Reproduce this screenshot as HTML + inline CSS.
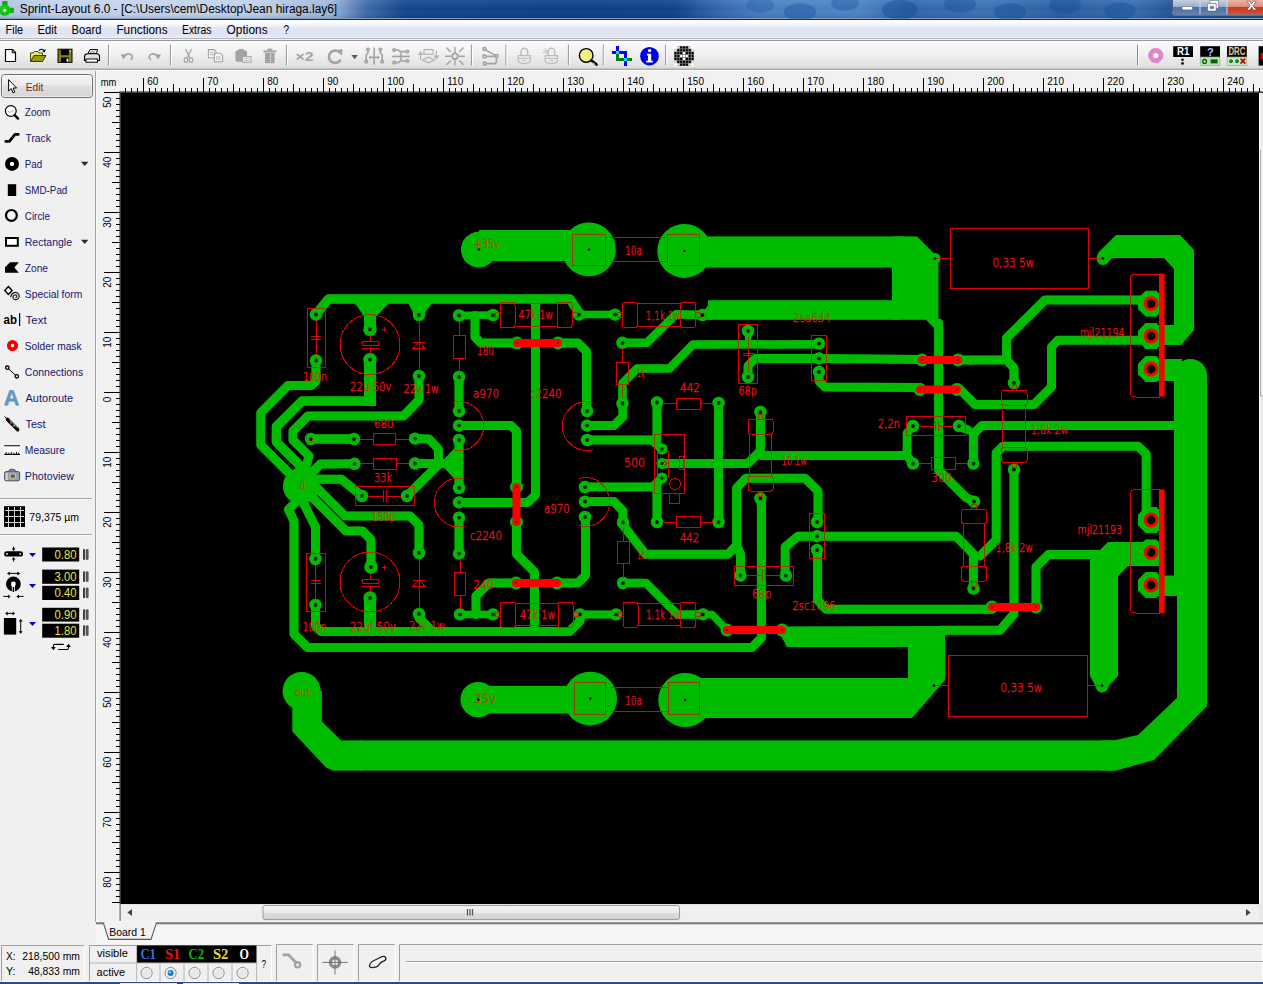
<!DOCTYPE html>
<html><head><meta charset="utf-8"><title>Sprint-Layout 6.0</title>
<style>

html,body{margin:0;padding:0}
body{width:1263px;height:984px;overflow:hidden;background:#f0f0f0;position:relative;font-family:"Liberation Sans",sans-serif;font-size:11px;color:#000}
svg{font-family:"Liberation Sans",sans-serif}

</style></head>
<body>

<svg id="main" width="1263" height="984" viewBox="0 0 1263 984" style="position:absolute;left:0;top:0">
<defs>
<linearGradient id="gTitle" x1="0" x2="1263" y1="0" y2="0" gradientUnits="userSpaceOnUse">
<stop offset="0" stop-color="#aec4e2"/><stop offset="0.05" stop-color="#c4d4ec"/><stop offset="0.2" stop-color="#bfd0ea"/>
<stop offset="0.262" stop-color="#9db6da"/><stop offset="0.29" stop-color="#3e6aa8"/><stop offset="0.32" stop-color="#12458c"/>
<stop offset="0.45" stop-color="#0c3d86"/><stop offset="0.535" stop-color="#0f418a"/><stop offset="0.56" stop-color="#2a5ea6"/><stop offset="0.60" stop-color="#477dc0"/>
<stop offset="0.68" stop-color="#4c83c6"/><stop offset="0.72" stop-color="#2f66ac"/><stop offset="0.78" stop-color="#3a70b4"/><stop offset="0.84" stop-color="#2a5fa4"/><stop offset="0.90" stop-color="#356aae"/><stop offset="0.93" stop-color="#1f5298"/><stop offset="1" stop-color="#1a4a8e"/>
</linearGradient>
<linearGradient id="gTitleV" x1="0" x2="0" y1="0" y2="1">
<stop offset="0" stop-color="#fff" stop-opacity="0.10"/><stop offset="0.5" stop-color="#fff" stop-opacity="0"/><stop offset="1" stop-color="#000" stop-opacity="0.10"/>
</linearGradient>
<linearGradient id="gMenu" x1="0" x2="0" y1="0" y2="1">
<stop offset="0" stop-color="#ffffff"/><stop offset="0.3" stop-color="#f3f5fb"/><stop offset="0.45" stop-color="#e1e5f3"/><stop offset="0.8" stop-color="#dfe3f2"/><stop offset="1" stop-color="#eceff8"/>
</linearGradient>
<linearGradient id="gTool" x1="0" x2="0" y1="0" y2="1">
<stop offset="0" stop-color="#fcfcfc"/><stop offset="0.5" stop-color="#efefef"/><stop offset="1" stop-color="#dedede"/>
</linearGradient>
<linearGradient id="gBtn" x1="0" x2="0" y1="0" y2="1">
<stop offset="0" stop-color="#f4f4f4"/><stop offset="0.45" stop-color="#ebebeb"/><stop offset="0.5" stop-color="#dfdfdf"/><stop offset="1" stop-color="#d6d6d6"/>
</linearGradient>
<linearGradient id="gWB" x1="0" x2="0" y1="0" y2="1">
<stop offset="0" stop-color="#c4d0e2"/><stop offset="0.45" stop-color="#9db0cc"/><stop offset="0.5" stop-color="#4f70a4"/><stop offset="1" stop-color="#5f82b6"/>
</linearGradient>
<linearGradient id="gWC" x1="0" x2="0" y1="0" y2="1">
<stop offset="0" stop-color="#ebb4a8"/><stop offset="0.45" stop-color="#de8c7c"/><stop offset="0.5" stop-color="#c8391f"/><stop offset="1" stop-color="#d8502c"/>
</linearGradient>
<linearGradient id="gThumb" x1="0" x2="0" y1="0" y2="1">
<stop offset="0" stop-color="#f6f6f6"/><stop offset="0.5" stop-color="#e9e9e9"/><stop offset="0.5" stop-color="#dcdcdc"/><stop offset="1" stop-color="#d2d2d2"/>
</linearGradient>
<linearGradient id="gScr" x1="0" x2="1" y1="0" y2="0">
<stop offset="0" stop-color="#101010"/><stop offset="0.5" stop-color="#6a6a6a"/><stop offset="1" stop-color="#101010"/>
</linearGradient>
</defs>
<rect x="0" y="0" width="1263" height="984" fill="#f0f0f0"/>
<rect x="0" y="0" width="1263" height="18" fill="url(#gTitle)"/>
<rect x="0" y="0" width="1263" height="18" fill="url(#gTitleV)"/>
<rect x="0" y="18" width="1263" height="1" fill="#7f9ccb"/>
<rect x="0" y="19" width="1263" height="1" fill="#1c2b55"/>
<ellipse cx="800" cy="12" rx="16" ry="8.8" fill="#14478e" opacity="0.35"/>
<ellipse cx="845" cy="3" rx="14" ry="7.7" fill="#14478e" opacity="0.3"/>
<ellipse cx="900" cy="10" rx="18" ry="9.9" fill="#14478e" opacity="0.4"/>
<ellipse cx="960" cy="4" rx="16" ry="8.8" fill="#14478e" opacity="0.35"/>
<ellipse cx="1010" cy="12" rx="16" ry="8.8" fill="#14478e" opacity="0.35"/>
<ellipse cx="1065" cy="5" rx="16" ry="8.8" fill="#14478e" opacity="0.35"/>
<ellipse cx="1120" cy="11" rx="16" ry="8.8" fill="#14478e" opacity="0.35"/>
<ellipse cx="760" cy="5" rx="14" ry="7.7" fill="#14478e" opacity="0.25"/>
<rect x="0" y="18" width="1263" height="2" fill="none"/>
<g><rect x="2.2" y="1" width="5.4" height="6" rx="1" fill="#0fae0f"/><rect x="6" y="7.8" width="8" height="5.2" rx="1" fill="#0fae0f"/><circle cx="4.8" cy="10.2" r="5.6" fill="#12c012"/><circle cx="4.2" cy="9.6" r="3.4" fill="#1ed41e" opacity="0.7"/><circle cx="4.8" cy="10.2" r="1.5" fill="#e8ffe8"/></g>
<text x="19.7" y="12.8" font-size="12" fill="#000" textLength="317.5" lengthAdjust="spacingAndGlyphs">Sprint-Layout 6.0 - [C:\Users\cem\Desktop\Jean hiraga.lay6]</text>
<path d="M1172,0 L1172,11 Q1172,15.5 1176.5,15.5 L1263,15.5 L1263,0 Z" fill="#dfe8f4" opacity="0.9"/>
<path d="M1173,0 L1173,10.5 Q1173,14.5 1177,14.5 L1199.5,14.5 L1199.5,0 Z" fill="url(#gWB)"/>
<rect x="1200.5" y="0" width="26" height="14.5" fill="url(#gWB)"/>
<rect x="1227.5" y="0" width="35.5" height="14.5" fill="url(#gWC)"/>
<path d="M1172.5,0 L1172.5,11 Q1172.5,15 1176.5,15 L1263,15" fill="none" stroke="#2a3f66" stroke-width="0.8"/>
<rect x="1182" y="6.5" width="10.5" height="3.4" fill="#fff" stroke="#44546c" stroke-width="0.5"/>
<path d="M1210,0.5 h8.5 v8 h-2.5 v-5.2 h-6 Z" fill="#fff" stroke="#44546c" stroke-width="0.5"/><path d="M1207.6,3.6 h8.5 v7.4 h-8.5 Z M1210.2,6.2 v2.4 h3.3 v-2.4 Z" fill="#fff" fill-rule="evenodd" stroke="#44546c" stroke-width="0.5"/>
<path d="M1247,1.2 L1249.8,1.2 L1251.6,4 L1253.4,1.2 L1256.2,1.2 L1253,5.6 L1256.4,10 L1253.4,10 L1251.6,7.2 L1249.8,10 L1246.8,10 L1250.2,5.6 Z" fill="#fff" stroke="#5a2a20" stroke-width="0.5"/>
<rect x="0" y="20" width="1263" height="18" fill="url(#gMenu)"/>
<rect x="0" y="38" width="1263" height="1" fill="#b4b6be"/><rect x="0" y="39" width="1263" height="1" fill="#f4f4f6"/><rect x="0" y="40" width="1263" height="1" fill="#989898"/>
<text x="5.6" y="33.8" font-size="12" fill="#000" textLength="17.6" lengthAdjust="spacingAndGlyphs">File</text>
<text x="37.6" y="33.8" font-size="12" fill="#000" textLength="19.4" lengthAdjust="spacingAndGlyphs">Edit</text>
<text x="71.6" y="33.8" font-size="12" fill="#000" textLength="29.8" lengthAdjust="spacingAndGlyphs">Board</text>
<text x="116.4" y="33.8" font-size="12" fill="#000" textLength="51.2" lengthAdjust="spacingAndGlyphs">Functions</text>
<text x="182" y="33.8" font-size="12" fill="#000" textLength="29.4" lengthAdjust="spacingAndGlyphs">Extras</text>
<text x="226.6" y="33.8" font-size="12" fill="#000" textLength="41" lengthAdjust="spacingAndGlyphs">Options</text>
<text x="283.4" y="33.8" font-size="12" fill="#000" textLength="5.6" lengthAdjust="spacingAndGlyphs">?</text>
<rect x="0" y="41" width="1263" height="27" fill="url(#gTool)"/>
<rect x="0" y="68" width="1263" height="1" fill="#c2c2c2"/><rect x="0" y="69" width="1263" height="1" fill="#adadad"/>
<rect x="0" y="70" width="95" height="874" fill="#f0f0f0"/>
<rect x="95" y="71" width="1" height="851" fill="#a2a2a2"/><rect x="96" y="71" width="1" height="851" fill="#fbfbfb"/>
<path d="M5.5,49.5 L12.5,49.5 L15.5,52.5 L15.5,61.5 L5.5,61.5 Z" fill="#fff" stroke="#000" stroke-width="1.2"/><path d="M12.2,49.5 L12.2,52.8 L15.5,52.8" fill="none" stroke="#000" stroke-width="1"/>
<path d="M30.5,61.5 L30.5,53 L33,53 L34.5,51.5 L38,51.5 L39,53 L42.5,53 L42.5,55.5" fill="#e8e870" stroke="#4a4a00" stroke-width="1"/><path d="M30.5,61.5 L34,55.5 L46,55.5 L42.5,61.5 Z" fill="#9a9a10" stroke="#3a3a00" stroke-width="1"/><path d="M39,50.5 Q42,47.8 44.3,50.8" fill="none" stroke="#000" stroke-width="1.1"/><path d="M45.8,49 L44.8,52.6 L42,51.2 Z" fill="#000"/>
<rect x="58" y="49.2" width="14" height="13.2" fill="#84840c" stroke="#000" stroke-width="1"/><rect x="60.8" y="49.6" width="8" height="5.6" fill="#000"/><rect x="61" y="57.4" width="8" height="5" fill="#000"/><rect x="66.6" y="58.6" width="1.8" height="3.2" fill="#fff"/><rect x="69.6" y="50.2" width="1.4" height="1.4" fill="#d8d8a0"/>
<path d="M88,53.5 L90,49.5 L97.5,49.5 L96.5,53.5 Z" fill="#fff" stroke="#000" stroke-width="1"/><path d="M84.5,57 Q84.5,54 87.5,53.8 L97,53.8 Q99.5,54 99.5,56.5 L99.5,60.5 L84.5,60.5 Z" fill="#e4e4e4" stroke="#000" stroke-width="1.1"/><rect x="86" y="59" width="11.5" height="3.2" fill="#fff" stroke="#000" stroke-width="1"/><rect x="90.5" y="57" width="3.4" height="1.4" fill="#d8d820"/><path d="M90.2,51 h5.4 M89.6,52.3 h5.4" stroke="#666" stroke-width="0.6"/>
<rect x="108.1" y="44.5" width="1" height="21" fill="#8c8c8c"/><rect x="109.1" y="44.5" width="1" height="21" fill="#ffffff"/>
<path d="M124,57 Q127,52.4 131,54.6 Q134,57 130.6,60" fill="none" stroke="#a3a3a3" stroke-width="1.5"/><path d="M120.6,54.4 L126.4,54.2 L123.4,59.4 Z" fill="#a3a3a3"/>
<path d="M157.6,57 Q154.6,52.4 150.6,54.6 Q147.6,57 151,60" fill="none" stroke="#a3a3a3" stroke-width="1.5"/><path d="M161,54.4 L155.2,54.2 L158.2,59.4 Z" fill="#a3a3a3"/>
<rect x="169.9" y="44.5" width="1" height="21" fill="#8c8c8c"/><rect x="170.9" y="44.5" width="1" height="21" fill="#ffffff"/>
<path d="M185.6,49 L189.6,57.6 M191.4,49 L187.4,57.6" stroke="#a3a3a3" stroke-width="1.2" fill="none"/><ellipse cx="186" cy="60" rx="1.8" ry="2.4" fill="none" stroke="#a3a3a3" stroke-width="1.1"/><ellipse cx="191" cy="60" rx="1.8" ry="2.4" fill="none" stroke="#a3a3a3" stroke-width="1.1"/>
<path d="M208.4,49.6 h5.6 l2,2 v6.2 h-7.6 Z" fill="#f6f6f6" stroke="#a3a3a3" stroke-width="1.1"/><path d="M214.4,53.2 h5.8 l2.4,2.4 v6.2 h-8.2 Z" fill="#f6f6f6" stroke="#a3a3a3" stroke-width="1.1"/><path d="M210,52.6 h3.6 M210,54.6 h3.6 M216,57 h4.8 M216,59 h4.8" stroke="#a3a3a3" stroke-width="0.8"/>
<rect x="235.4" y="50.6" width="11.6" height="11.2" rx="1.6" fill="#a3a3a3"/><rect x="238.4" y="49" width="5.6" height="2.6" rx="0.8" fill="#a3a3a3"/><rect x="242.6" y="56.6" width="8.4" height="5.6" fill="#f6f6f6" stroke="#a3a3a3" stroke-width="1"/><path d="M244,58.6 h5.4 M244,60.4 h5.4" stroke="#a3a3a3" stroke-width="0.7"/>
<rect x="265" y="52.8" width="9.6" height="10.4" fill="#a3a3a3"/><rect x="263.4" y="50.4" width="12.8" height="2" fill="#a3a3a3"/><rect x="267.4" y="48.6" width="4.8" height="2" fill="#a3a3a3"/><path d="M270.6,54 v8" stroke="#fff" stroke-width="0.9" stroke-dasharray="1.4 1"/>
<rect x="285.9" y="44.5" width="1" height="21" fill="#8c8c8c"/><rect x="286.9" y="44.5" width="1" height="21" fill="#ffffff"/>
<text x="295.6" y="61.4" font-size="12.5" font-weight="bold" fill="#a3a3a3" textLength="18" lengthAdjust="spacingAndGlyphs">×2</text>
<path d="M340.6,59.6 A6.2,6.2 0 1 1 339.8,52.6" fill="none" stroke="#a3a3a3" stroke-width="2.6"/><path d="M336,50 L342.6,49 L342,55.8 Z" fill="#a3a3a3"/>
<path d="M351.4,55 L357.8,55 L354.6,59.2 Z" fill="#5a5a5a"/>
<g fill="none" stroke="#a3a3a3" stroke-width="1.6"><path d="M374.2,47.6 v17"/><path d="M368,50.6 v2.4 l-1.8,2 v5.4"/><path d="M380.4,50.6 v2.4 l1.8,2 v5.4"/><path d="M369.4,57.4 h9.8"/><circle cx="368" cy="49.6" r="1.3"/><circle cx="366.2" cy="61.6" r="1.3"/><circle cx="380.4" cy="49.6" r="1.3"/><circle cx="382.2" cy="61.6" r="1.3"/></g><path d="M368.6,57.4 l2.4,-1.8 v3.6 Z M379.8,57.4 l-2.4,-1.8 v3.6 Z" fill="#a3a3a3"/>
<g fill="none" stroke="#a3a3a3" stroke-width="1.6"><path d="M392,56.4 h18"/><path d="M395.4,50 h3 l1.8,1.6 h6"/><path d="M395.4,62.6 h3 l1.8,-1.6 h6"/><path d="M401,52.4 v8"/><circle cx="394.2" cy="50" r="1.3"/><circle cx="407.4" cy="51.6" r="1.3"/><circle cx="394.2" cy="62.6" r="1.3"/><circle cx="407.4" cy="61" r="1.3"/></g>
<g fill="none" stroke="#b4b4b4" stroke-width="1.2"><rect x="424" y="49.6" width="9" height="4.6"/><path d="M420.6,53.4 v6.6 M420.6,52 l-1.8,2.4 h3.6 Z"/><path d="M436.4,50.4 v6.6 M436.4,58.6 l-1.8,-2.4 h3.6 Z"/><path d="M422.6,60 l6,-2.8 l6,2.8 l-6,2.8 Z"/></g>
<g fill="none" stroke="#a3a3a3" stroke-width="1.4"><path d="M455,47 v6 M455,59.4 v6 M445,56.2 h6.6 M458.4,56.2 h6.6"/><path d="M446.4,47.6 l4.4,4.4 M463.6,47.6 l-4.4,4.4 M446.4,64.8 l4.4,-4.4 M463.6,64.8 l-4.4,-4.4"/><circle cx="455" cy="56.2" r="2.8" stroke-width="1.8"/></g>
<rect x="470.9" y="44.5" width="1" height="21" fill="#8c8c8c"/><rect x="471.9" y="44.5" width="1" height="21" fill="#ffffff"/>
<g fill="none" stroke="#a3a3a3" stroke-width="1.6"><path d="M485,49.6 L496,55.6 M485,56.4 h9.6 M496.4,57.4 v5.4 M486.4,63.6 h10"/><circle cx="484.4" cy="49" r="1.5"/><circle cx="484.4" cy="56.4" r="1.5"/><circle cx="484.8" cy="63.6" r="1.5"/><circle cx="496.6" cy="56" r="1.5"/></g>
<rect x="505.5" y="44.5" width="1" height="21" fill="#8c8c8c"/><rect x="506.5" y="44.5" width="1" height="21" fill="#ffffff"/>
<g fill="none" stroke="#bcbcbc"><path d="M521.1,55 v-3 a3,3.4 0 0 1 6.6,0 v3" stroke-width="1.5"/><path d="M518.1,55.6 h12.4 v4 q0,4 -6.2,4 q-6.2,0 -6.2,-4 Z" stroke-width="1.2" fill="#ececec"/><path d="M518.1,58.4 h12.4 M522.1,60.8 h4.4" stroke-width="1"/></g>
<g fill="none" stroke="#bcbcbc"><path d="M548.1,55 v-3 a3,3.4 0 0 1 6.6,0 v3" stroke-width="1.5"/><path d="M545.1,55.6 h12.4 v4 q0,4 -6.2,4 q-6.2,0 -6.2,-4 Z" stroke-width="1.2" fill="#ececec"/><path d="M545.1,58.4 h12.4 M549.1,60.8 h4.4" stroke-width="1"/></g>
<path d="M543.6,49.6 l3.6,3 M545.6,48.4 l1.4,3.6 M542.6,52.4 l4,0.6" stroke="#bcbcbc" stroke-width="0.9"/>
<rect x="567.9" y="44.5" width="1" height="21" fill="#8c8c8c"/><rect x="568.9" y="44.5" width="1" height="21" fill="#ffffff"/>
<circle cx="586.2" cy="55.4" r="6.8" fill="#f2f28a" stroke="#000" stroke-width="1.4"/><path d="M591.4,60.4 L596.6,64.6" stroke="#000" stroke-width="2.6" stroke-linecap="round"/><path d="M592.6,62.4 L595,64.2" stroke="#fff" stroke-width="0.7"/>
<rect x="602.8" y="44.5" width="1" height="21" fill="#8c8c8c"/><rect x="603.8" y="44.5" width="1" height="21" fill="#ffffff"/>
<g shape-rendering="crispEdges"><rect x="612" y="51" width="9" height="3" fill="#0000ff"/><rect x="616" y="46" width="3" height="5" fill="#0000ff"/><rect x="616" y="54" width="3" height="7" fill="#008000"/><rect x="619" y="58" width="13" height="3" fill="#008000"/><rect x="624" y="51" width="3" height="7" fill="#0000ff"/><rect x="624" y="61" width="3" height="5" fill="#0000ff"/><rect x="616" y="51" width="3" height="3" fill="#00e0ff"/><rect x="624" y="58" width="3" height="3" fill="#00e0ff"/><rect x="619" y="51" width="5" height="3" fill="#0000ff"/></g>
<circle cx="649.5" cy="56.2" r="9.3" fill="#0000e6"/><circle cx="649.6" cy="50.6" r="1.7" fill="#fff"/><path d="M647,53.8 h4.2 v7 h1.6 v1.6 h-6.6 v-1.6 h1.8 v-5.4 h-1 Z" fill="#fff"/>
<rect x="665.2" y="44.5" width="1" height="21" fill="#8c8c8c"/><rect x="666.2" y="44.5" width="1" height="21" fill="#ffffff"/>
<g><rect x="674" y="46" width="20" height="20" fill="#878787"/><rect x="674.4" y="46.4" width="2.1" height="2.1" fill="#fff"/><rect x="677.26" y="46.4" width="2.1" height="2.1" fill="#fff"/><rect x="680.12" y="46.4" width="2.1" height="2.1" fill="#000"/><rect x="682.98" y="46.4" width="2.1" height="2.1" fill="#000"/><rect x="685.84" y="46.4" width="2.1" height="2.1" fill="#000"/><rect x="688.7" y="46.4" width="2.1" height="2.1" fill="#fff"/><rect x="691.56" y="46.4" width="2.1" height="2.1" fill="#fff"/><rect x="674.4" y="49.26" width="2.1" height="2.1" fill="#fff"/><rect x="677.26" y="49.26" width="2.1" height="2.1" fill="#000"/><rect x="680.12" y="49.26" width="2.1" height="2.1" fill="#000"/><rect x="682.98" y="49.26" width="2.1" height="2.1" fill="#000"/><rect x="685.84" y="49.26" width="2.1" height="2.1" fill="#000"/><rect x="688.7" y="49.26" width="2.1" height="2.1" fill="#000"/><rect x="691.56" y="49.26" width="2.1" height="2.1" fill="#fff"/><rect x="674.4" y="52.12" width="2.1" height="2.1" fill="#000"/><rect x="677.26" y="52.12" width="2.1" height="2.1" fill="#000"/><rect x="680.12" y="52.12" width="2.1" height="2.1" fill="#000"/><rect x="682.98" y="52.12" width="2.1" height="2.1" fill="#fff"/><rect x="685.84" y="52.12" width="2.1" height="2.1" fill="#000"/><rect x="688.7" y="52.12" width="2.1" height="2.1" fill="#000"/><rect x="691.56" y="52.12" width="2.1" height="2.1" fill="#000"/><rect x="674.4" y="54.98" width="2.1" height="2.1" fill="#000"/><rect x="677.26" y="54.98" width="2.1" height="2.1" fill="#000"/><rect x="680.12" y="54.98" width="2.1" height="2.1" fill="#fff"/><rect x="682.98" y="54.98" width="2.1" height="2.1" fill="#fff"/><rect x="685.84" y="54.98" width="2.1" height="2.1" fill="#fff"/><rect x="688.7" y="54.98" width="2.1" height="2.1" fill="#000"/><rect x="691.56" y="54.98" width="2.1" height="2.1" fill="#000"/><rect x="674.4" y="57.84" width="2.1" height="2.1" fill="#000"/><rect x="677.26" y="57.84" width="2.1" height="2.1" fill="#000"/><rect x="680.12" y="57.84" width="2.1" height="2.1" fill="#000"/><rect x="682.98" y="57.84" width="2.1" height="2.1" fill="#fff"/><rect x="685.84" y="57.84" width="2.1" height="2.1" fill="#000"/><rect x="688.7" y="57.84" width="2.1" height="2.1" fill="#000"/><rect x="691.56" y="57.84" width="2.1" height="2.1" fill="#000"/><rect x="674.4" y="60.7" width="2.1" height="2.1" fill="#fff"/><rect x="677.26" y="60.7" width="2.1" height="2.1" fill="#000"/><rect x="680.12" y="60.7" width="2.1" height="2.1" fill="#000"/><rect x="682.98" y="60.7" width="2.1" height="2.1" fill="#000"/><rect x="685.84" y="60.7" width="2.1" height="2.1" fill="#000"/><rect x="688.7" y="60.7" width="2.1" height="2.1" fill="#000"/><rect x="691.56" y="60.7" width="2.1" height="2.1" fill="#fff"/><rect x="674.4" y="63.56" width="2.1" height="2.1" fill="#fff"/><rect x="677.26" y="63.56" width="2.1" height="2.1" fill="#fff"/><rect x="680.12" y="63.56" width="2.1" height="2.1" fill="#000"/><rect x="682.98" y="63.56" width="2.1" height="2.1" fill="#000"/><rect x="685.84" y="63.56" width="2.1" height="2.1" fill="#000"/><rect x="688.7" y="63.56" width="2.1" height="2.1" fill="#fff"/><rect x="691.56" y="63.56" width="2.1" height="2.1" fill="#fff"/><rect x="674" y="46" width="2.9" height="2.9" fill="#fff"/><rect x="691.1" y="46" width="2.9" height="2.9" fill="#fff"/><rect x="674" y="63.1" width="2.9" height="2.9" fill="#fff"/><rect x="691.1" y="63.1" width="2.9" height="2.9" fill="#fff"/></g>
<rect x="1137" y="44.5" width="1" height="21" fill="#8c8c8c"/><rect x="1138" y="44.5" width="1" height="21" fill="#ffffff"/>
<circle cx="1155.7" cy="55.5" r="5.1" fill="#fff" stroke="#e184cb" stroke-width="5"/>
<rect x="1173.2" y="46.2" width="19.8" height="10.8" fill="#000"/><text x="1177" y="55.4" font-size="10.5" font-weight="bold" fill="#fff" textLength="12.4" lengthAdjust="spacingAndGlyphs">R1</text><circle cx="1182.5" cy="59.8" r="1.3" fill="#000"/><circle cx="1182.5" cy="63.4" r="1.3" fill="#000"/>
<rect x="1200.2" y="46.2" width="19.8" height="10.8" fill="#000"/><text x="1207" y="55.6" font-size="11" font-weight="bold" fill="#a8cfff">?</text><rect x="1200.2" y="57" width="19.8" height="8.6" fill="#b9dfb9" stroke="#8aa88a" stroke-width="0.6"/><circle cx="1204.6" cy="61.4" r="1.9" fill="none" stroke="#006400" stroke-width="1.3"/><rect x="1210.6" y="59.4" width="7" height="4" fill="#006400"/>
<rect x="1227" y="46.2" width="19.8" height="10.8" fill="#000"/><text x="1228.4" y="55.4" font-size="10" font-weight="bold" fill="#eccb94" textLength="17" lengthAdjust="spacingAndGlyphs">DRC</text><rect x="1227" y="57" width="19.8" height="8.6" fill="#c6e6c6" stroke="#8aa88a" stroke-width="0.6"/><circle cx="1231" cy="61.2" r="1.5" fill="#00c000" stroke="#004000" stroke-width="0.7"/><circle cx="1237" cy="61.2" r="1.5" fill="#00c000" stroke="#004000" stroke-width="0.7"/><path d="M1240.6,58.6 l4.6,5 M1245.2,58.6 l-4.6,5" stroke="#c00000" stroke-width="1.6"/>
<rect x="1258.6" y="46.2" width="4.4" height="19.4" fill="#000"/><rect x="1260.6" y="53" width="2.4" height="6" fill="#e00000"/>
<rect x="1.5" y="74.5" width="91" height="23" rx="3.2" fill="url(#gBtn)" stroke="#6f6f6f" stroke-width="1"/><rect x="2.5" y="75.5" width="89" height="21" rx="2.4" fill="none" stroke="#fafafa" stroke-width="0.8" opacity="0.8"/>
<path d="M8.6,79.6 L8.6,91 L11.2,88.6 L13,92.8 L14.8,92 L13,88 L16.6,88 Z" fill="#fff" stroke="#000" stroke-width="1"/>
<text x="25.7" y="90.7" font-size="11" fill="#8c1c1c" textLength="17.7" lengthAdjust="spacingAndGlyphs">Edit</text>
<text x="24.8" y="115.6" font-size="11" fill="#15156e" textLength="25.5" lengthAdjust="spacingAndGlyphs">Zoom</text>
<text x="25.5" y="141.6" font-size="11" fill="#15156e" textLength="25.3" lengthAdjust="spacingAndGlyphs">Track</text>
<text x="24.8" y="167.6" font-size="11" fill="#15156e" textLength="17.4" lengthAdjust="spacingAndGlyphs">Pad</text>
<text x="24.8" y="193.6" font-size="11" fill="#15156e" textLength="42.5" lengthAdjust="spacingAndGlyphs">SMD-Pad</text>
<text x="24.8" y="219.6" font-size="11" fill="#15156e" textLength="25.2" lengthAdjust="spacingAndGlyphs">Circle</text>
<text x="24.8" y="245.6" font-size="11" fill="#15156e" textLength="47.2" lengthAdjust="spacingAndGlyphs">Rectangle</text>
<text x="24.8" y="271.6" font-size="11" fill="#15156e" textLength="23.2" lengthAdjust="spacingAndGlyphs">Zone</text>
<text x="24.8" y="297.6" font-size="11" fill="#15156e" textLength="57.5" lengthAdjust="spacingAndGlyphs">Special form</text>
<text x="25.5" y="323.6" font-size="11" fill="#15156e" textLength="21.2" lengthAdjust="spacingAndGlyphs">Text</text>
<text x="24.8" y="349.6" font-size="11" fill="#15156e" textLength="56.8" lengthAdjust="spacingAndGlyphs">Solder mask</text>
<text x="24.8" y="375.6" font-size="11" fill="#15156e" textLength="58.4" lengthAdjust="spacingAndGlyphs">Connections</text>
<text x="25.5" y="401.6" font-size="11" fill="#15156e" textLength="47.7" lengthAdjust="spacingAndGlyphs">Autoroute</text>
<text x="25.5" y="427.6" font-size="11" fill="#15156e" textLength="20.1" lengthAdjust="spacingAndGlyphs">Test</text>
<text x="24.8" y="453.6" font-size="11" fill="#15156e" textLength="40.2" lengthAdjust="spacingAndGlyphs">Measure</text>
<text x="24.8" y="479.6" font-size="11" fill="#15156e" textLength="49.2" lengthAdjust="spacingAndGlyphs">Photoview</text>
<circle cx="10.8" cy="111" r="5.4" fill="#fff" stroke="#000" stroke-width="1.2"/><path d="M7.6,111 q1.6,2 3.2,1 q1.4,-0.8 3,-1.4" fill="none" stroke="#888" stroke-width="0.7"/><path d="M14.6,115.2 L18,118.6" stroke="#000" stroke-width="2.4" stroke-linecap="round"/>
<path d="M5.8,141.4 L9.4,141.4 L15,134.4 L18.2,134.4" fill="none" stroke="#000" stroke-width="2.8" stroke-linecap="round" stroke-linejoin="round"/>
<circle cx="12" cy="163.9" r="4.6" fill="#fff" stroke="#000" stroke-width="4.8"/>
<path d="M81,161.8 L88.4,161.8 L84.7,166 Z" fill="#2c2c2c"/>
<rect x="7.8" y="184.2" width="8.4" height="11.8" fill="#000"/>
<circle cx="11.4" cy="215.4" r="5.4" fill="#f4f4f4" stroke="#000" stroke-width="2.2"/>
<rect x="6" y="238" width="11.8" height="7.8" fill="#fff" stroke="#000" stroke-width="2"/>
<path d="M81,239.8 L88.4,239.8 L84.7,244 Z" fill="#2c2c2c"/>
<path d="M5,272.8 L5,267.2 L10,262.2 L18.8,262.2 L14.4,267.6 L18.8,272.8 Z" fill="#000"/>
<path d="M8.4,286.6 L12,290.6 L8.4,294.4 L4.8,290.6 Z" fill="#fff" stroke="#000" stroke-width="1.5"/><path d="M15.4,297.6 q1.8,-0.2 1.4,-1.8 q-0.6,-1.4 -2.4,-0.8 q-2,1 -1.2,3.2 q1.2,2.2 4,1.2 q2.8,-1.6 1.8,-4.6 q-1.4,-3 -5,-2.2 q-3,1 -3.2,4.6" fill="none" stroke="#222" stroke-width="1.2"/>
<text x="3.6" y="324" font-size="13" font-weight="bold" fill="#000" textLength="13.4" lengthAdjust="spacingAndGlyphs">ab</text><rect x="19" y="313" width="1.2" height="13" fill="#000"/>
<circle cx="12.5" cy="345.6" r="3.7" fill="#fff" stroke="#f00000" stroke-width="3.8"/>
<path d="M7.3,367.7 L16.8,376.3" stroke="#000" stroke-width="1"/><circle cx="7.3" cy="367.7" r="1.7" fill="#f0f0f0" stroke="#000" stroke-width="1.3"/><circle cx="16.8" cy="376.3" r="1.7" fill="#f0f0f0" stroke="#000" stroke-width="1.3"/>
<text x="4.2" y="405.6" font-size="22" font-weight="bold" fill="#8a9aa4" opacity="0.7" textLength="15.6" lengthAdjust="spacingAndGlyphs">A</text><text x="3.6" y="404.8" font-size="22" font-weight="bold" fill="#5b9bc9" textLength="15.6" lengthAdjust="spacingAndGlyphs">A</text>
<path d="M4.6,416.4 L8,420" stroke="#000" stroke-width="1"/><path d="M7.6,419.4 L17.6,429.6" stroke="#000" stroke-width="3.6" stroke-linecap="round"/><path d="M16.6,428.4 L18.6,431" stroke="#000" stroke-width="1.6"/><circle cx="10.8" cy="422.8" r="1.2" fill="#e02020"/><circle cx="13.8" cy="425.8" r="1.2" fill="#20a040"/><path d="M9.4,419.6 L17.4,427.8" stroke="#fff" stroke-width="0.6"/>
<rect x="4.2" y="445.6" width="15.8" height="9" fill="#fff"/><path d="M4.2,445.8 h15.8 M4.2,454.4 h15.8" stroke="#000" stroke-width="1.1"/><path d="M6.2,454 v-2.2 M8.8,454 v-1.4 M11.4,454 v-2.2 M14,454 v-1.4 M16.6,454 v-2.2 M18.6,454 v-1.4" stroke="#000" stroke-width="0.9"/>
<rect x="4.6" y="471.6" width="15" height="9.2" rx="1.6" fill="#9aa0a8" stroke="#4a4e56" stroke-width="1"/><path d="M8.6,471.4 l1.2,-2 h4.8 l1.2,2" fill="#80868e" stroke="#4a4e56" stroke-width="0.9"/><circle cx="12.8" cy="476.4" r="2.8" fill="#5a6068" stroke="#d8dce0" stroke-width="0.9"/><rect x="5.4" y="473" width="2.6" height="7" fill="#c8ccd0"/><circle cx="13" cy="478.4" r="1.1" fill="#f0a020"/>
<rect x="0" y="498" width="92" height="1" fill="#a8a8a8"/><rect x="0" y="499" width="92" height="1" fill="#fbfbfb"/>
<rect x="0" y="534" width="92" height="1" fill="#a8a8a8"/><rect x="0" y="535" width="92" height="1" fill="#fbfbfb"/>
<rect x="4" y="506.2" width="21" height="20.8" fill="#000"/><path d="M8.5,507 v19.6 M14.5,507 v19.6 M20.5,507 v19.6 M4.6,510.5 h19.8 M4.6,516.5 h19.8 M4.6,522.5 h19.8" stroke="#d4d4d4" stroke-width="1" shape-rendering="crispEdges"/>
<text x="29.3" y="520.7" font-size="11" fill="#000" textLength="49.8" lengthAdjust="spacingAndGlyphs">79,375 µm</text>
<rect x="42.2" y="547.5" width="37" height="14" fill="#000"/>
<text x="76.6" y="558.6" font-size="12" fill="#e6e646" text-anchor="end" textLength="22" lengthAdjust="spacingAndGlyphs">0.80</text>
<rect x="83" y="549.1" width="2.2" height="10.8" rx="1" fill="url(#gScr)"/><rect x="86.2" y="549.1" width="2.2" height="10.8" rx="1" fill="url(#gScr)"/>
<rect x="42.2" y="569.6" width="37" height="14.2" fill="#000"/>
<text x="76.6" y="580.8" font-size="12" fill="#e6e646" text-anchor="end" textLength="22" lengthAdjust="spacingAndGlyphs">3.00</text>
<rect x="83" y="571.3" width="2.2" height="10.8" rx="1" fill="url(#gScr)"/><rect x="86.2" y="571.3" width="2.2" height="10.8" rx="1" fill="url(#gScr)"/>
<rect x="42.2" y="585.8" width="37" height="14.2" fill="#000"/>
<text x="76.6" y="596.8" font-size="12" fill="#e6e646" text-anchor="end" textLength="22" lengthAdjust="spacingAndGlyphs">0.40</text>
<rect x="83" y="587.5" width="2.2" height="10.8" rx="1" fill="url(#gScr)"/><rect x="86.2" y="587.5" width="2.2" height="10.8" rx="1" fill="url(#gScr)"/>
<rect x="42.2" y="607.8" width="37" height="13.8" fill="#000"/>
<text x="76.6" y="618.6" font-size="12" fill="#e6e646" text-anchor="end" textLength="22" lengthAdjust="spacingAndGlyphs">0.90</text>
<rect x="83" y="609.3" width="2.2" height="10.8" rx="1" fill="url(#gScr)"/><rect x="86.2" y="609.3" width="2.2" height="10.8" rx="1" fill="url(#gScr)"/>
<rect x="42.2" y="623.7" width="37" height="14" fill="#000"/>
<text x="76.6" y="634.8" font-size="12" fill="#e6e646" text-anchor="end" textLength="22" lengthAdjust="spacingAndGlyphs">1.80</text>
<rect x="83" y="625.3" width="2.2" height="10.8" rx="1" fill="url(#gScr)"/><rect x="86.2" y="625.3" width="2.2" height="10.8" rx="1" fill="url(#gScr)"/>
<path d="M29,553 L36,553 L32.5,557 Z" fill="#0000d8"/>
<path d="M29,584 L36,584 L32.5,588 Z" fill="#0000d8"/>
<path d="M29,622 L36,622 L32.5,626 Z" fill="#0000d8"/>
<rect x="4.2" y="551.2" width="18.8" height="5.4" rx="2.7" fill="#000"/><circle cx="7" cy="553.9" r="0.9" fill="#fff"/><circle cx="20.2" cy="553.9" r="0.9" fill="#fff"/><path d="M13.6,546.6 v4 M13.6,561.6 v-4" stroke="#000" stroke-width="1"/><path d="M11.6,548.6 h4 l-2,2.2 Z M11.6,559.6 h4 l-2,-2.2 Z" fill="#000"/>
<path d="M7.6,573.4 h12" stroke="#000" stroke-width="1"/><path d="M7.2,573.4 l2.6,-2 v4 Z M20,573.4 l-2.6,-2 v4 Z" fill="#000"/>
<circle cx="13.4" cy="584" r="4.9" fill="#fff" stroke="#000" stroke-width="5"/><rect x="11.8" y="584" width="3.2" height="8.4" fill="#fff"/><rect x="12.6" y="587" width="1.6" height="5" fill="#000"/>
<path d="M3.4,596.4 h6 M17.6,596.4 h6" stroke="#000" stroke-width="1"/><path d="M10.6,596.4 l-2.6,-2 v4 Z M16.4,596.4 l2.6,-2 v4 Z" fill="#000"/>
<rect x="3.9" y="618" width="12.3" height="16.6" fill="#000"/><path d="M6,613.4 h8.4" stroke="#000" stroke-width="1"/><path d="M5.2,613.4 l2.4,-2 v4 Z M15,613.4 l-2.4,-2 v4 Z" fill="#000"/><path d="M20.7,620.4 v12" stroke="#000" stroke-width="1"/><path d="M20.7,619 l-2,2.6 h4 Z M20.7,633.8 l-2,-2.6 h4 Z" fill="#000"/>
<path d="M63.8,644.4 H55 Q53.4,644.4 53.4,646 V647.4 M58.1,649.5 H67 Q68.5,649.5 68.5,648 V646.6" fill="none" stroke="#000" stroke-width="1.1"/><path d="M51,647 H55.8 L53.4,650.2 Z M66.1,646.9 H70.9 L68.5,643.8 Z" fill="#000"/>
<rect x="97" y="70" width="1166" height="852" fill="#f1f1f1"/><rect x="97" y="70" width="1166" height="1" fill="#fbfbfb"/>
<rect x="119" y="91" width="1144" height="813" fill="#8a8a8a"/>
<rect x="120" y="92" width="1143" height="812" fill="#3a3a3a"/>
<rect x="121" y="93" width="1138" height="811" fill="#000"/>
<g id="rulers">
<g stroke="#000" stroke-width="1" shape-rendering="crispEdges">
<line x1="125.5" y1="88" x2="125.5" y2="91.5"/>
<line x1="131.5" y1="88" x2="131.5" y2="91.5"/>
<line x1="137.5" y1="88" x2="137.5" y2="91.5"/>
<line x1="143.5" y1="78" x2="143.5" y2="91.5"/>
<line x1="149.5" y1="88" x2="149.5" y2="91.5"/>
<line x1="155.5" y1="88" x2="155.5" y2="91.5"/>
<line x1="161.5" y1="88" x2="161.5" y2="91.5"/>
<line x1="167.5" y1="88" x2="167.5" y2="91.5"/>
<line x1="173.5" y1="84" x2="173.5" y2="91.5"/>
<line x1="179.5" y1="88" x2="179.5" y2="91.5"/>
<line x1="185.5" y1="88" x2="185.5" y2="91.5"/>
<line x1="191.5" y1="88" x2="191.5" y2="91.5"/>
<line x1="197.5" y1="88" x2="197.5" y2="91.5"/>
<line x1="203.5" y1="78" x2="203.5" y2="91.5"/>
<line x1="209.5" y1="88" x2="209.5" y2="91.5"/>
<line x1="215.5" y1="88" x2="215.5" y2="91.5"/>
<line x1="221.5" y1="88" x2="221.5" y2="91.5"/>
<line x1="227.5" y1="88" x2="227.5" y2="91.5"/>
<line x1="233.5" y1="84" x2="233.5" y2="91.5"/>
<line x1="239.5" y1="88" x2="239.5" y2="91.5"/>
<line x1="245.5" y1="88" x2="245.5" y2="91.5"/>
<line x1="251.5" y1="88" x2="251.5" y2="91.5"/>
<line x1="257.5" y1="88" x2="257.5" y2="91.5"/>
<line x1="263.5" y1="78" x2="263.5" y2="91.5"/>
<line x1="269.5" y1="88" x2="269.5" y2="91.5"/>
<line x1="275.5" y1="88" x2="275.5" y2="91.5"/>
<line x1="281.5" y1="88" x2="281.5" y2="91.5"/>
<line x1="287.5" y1="88" x2="287.5" y2="91.5"/>
<line x1="293.5" y1="84" x2="293.5" y2="91.5"/>
<line x1="299.5" y1="88" x2="299.5" y2="91.5"/>
<line x1="305.5" y1="88" x2="305.5" y2="91.5"/>
<line x1="311.5" y1="88" x2="311.5" y2="91.5"/>
<line x1="317.5" y1="88" x2="317.5" y2="91.5"/>
<line x1="323.5" y1="78" x2="323.5" y2="91.5"/>
<line x1="329.5" y1="88" x2="329.5" y2="91.5"/>
<line x1="335.5" y1="88" x2="335.5" y2="91.5"/>
<line x1="341.5" y1="88" x2="341.5" y2="91.5"/>
<line x1="347.5" y1="88" x2="347.5" y2="91.5"/>
<line x1="353.5" y1="84" x2="353.5" y2="91.5"/>
<line x1="359.5" y1="88" x2="359.5" y2="91.5"/>
<line x1="365.5" y1="88" x2="365.5" y2="91.5"/>
<line x1="371.5" y1="88" x2="371.5" y2="91.5"/>
<line x1="377.5" y1="88" x2="377.5" y2="91.5"/>
<line x1="383.5" y1="78" x2="383.5" y2="91.5"/>
<line x1="389.5" y1="88" x2="389.5" y2="91.5"/>
<line x1="395.5" y1="88" x2="395.5" y2="91.5"/>
<line x1="401.5" y1="88" x2="401.5" y2="91.5"/>
<line x1="407.5" y1="88" x2="407.5" y2="91.5"/>
<line x1="413.5" y1="84" x2="413.5" y2="91.5"/>
<line x1="419.5" y1="88" x2="419.5" y2="91.5"/>
<line x1="425.5" y1="88" x2="425.5" y2="91.5"/>
<line x1="431.5" y1="88" x2="431.5" y2="91.5"/>
<line x1="437.5" y1="88" x2="437.5" y2="91.5"/>
<line x1="443.5" y1="78" x2="443.5" y2="91.5"/>
<line x1="449.5" y1="88" x2="449.5" y2="91.5"/>
<line x1="455.5" y1="88" x2="455.5" y2="91.5"/>
<line x1="461.5" y1="88" x2="461.5" y2="91.5"/>
<line x1="467.5" y1="88" x2="467.5" y2="91.5"/>
<line x1="473.5" y1="84" x2="473.5" y2="91.5"/>
<line x1="479.5" y1="88" x2="479.5" y2="91.5"/>
<line x1="485.5" y1="88" x2="485.5" y2="91.5"/>
<line x1="491.5" y1="88" x2="491.5" y2="91.5"/>
<line x1="497.5" y1="88" x2="497.5" y2="91.5"/>
<line x1="503.5" y1="78" x2="503.5" y2="91.5"/>
<line x1="509.5" y1="88" x2="509.5" y2="91.5"/>
<line x1="515.5" y1="88" x2="515.5" y2="91.5"/>
<line x1="521.5" y1="88" x2="521.5" y2="91.5"/>
<line x1="527.5" y1="88" x2="527.5" y2="91.5"/>
<line x1="533.5" y1="84" x2="533.5" y2="91.5"/>
<line x1="539.5" y1="88" x2="539.5" y2="91.5"/>
<line x1="545.5" y1="88" x2="545.5" y2="91.5"/>
<line x1="551.5" y1="88" x2="551.5" y2="91.5"/>
<line x1="557.5" y1="88" x2="557.5" y2="91.5"/>
<line x1="563.5" y1="78" x2="563.5" y2="91.5"/>
<line x1="569.5" y1="88" x2="569.5" y2="91.5"/>
<line x1="575.5" y1="88" x2="575.5" y2="91.5"/>
<line x1="581.5" y1="88" x2="581.5" y2="91.5"/>
<line x1="587.5" y1="88" x2="587.5" y2="91.5"/>
<line x1="593.5" y1="84" x2="593.5" y2="91.5"/>
<line x1="599.5" y1="88" x2="599.5" y2="91.5"/>
<line x1="605.5" y1="88" x2="605.5" y2="91.5"/>
<line x1="611.5" y1="88" x2="611.5" y2="91.5"/>
<line x1="617.5" y1="88" x2="617.5" y2="91.5"/>
<line x1="623.5" y1="78" x2="623.5" y2="91.5"/>
<line x1="629.5" y1="88" x2="629.5" y2="91.5"/>
<line x1="635.5" y1="88" x2="635.5" y2="91.5"/>
<line x1="641.5" y1="88" x2="641.5" y2="91.5"/>
<line x1="647.5" y1="88" x2="647.5" y2="91.5"/>
<line x1="653.5" y1="84" x2="653.5" y2="91.5"/>
<line x1="659.5" y1="88" x2="659.5" y2="91.5"/>
<line x1="665.5" y1="88" x2="665.5" y2="91.5"/>
<line x1="671.5" y1="88" x2="671.5" y2="91.5"/>
<line x1="677.5" y1="88" x2="677.5" y2="91.5"/>
<line x1="683.5" y1="78" x2="683.5" y2="91.5"/>
<line x1="689.5" y1="88" x2="689.5" y2="91.5"/>
<line x1="695.5" y1="88" x2="695.5" y2="91.5"/>
<line x1="701.5" y1="88" x2="701.5" y2="91.5"/>
<line x1="707.5" y1="88" x2="707.5" y2="91.5"/>
<line x1="713.5" y1="84" x2="713.5" y2="91.5"/>
<line x1="719.5" y1="88" x2="719.5" y2="91.5"/>
<line x1="725.5" y1="88" x2="725.5" y2="91.5"/>
<line x1="731.5" y1="88" x2="731.5" y2="91.5"/>
<line x1="737.5" y1="88" x2="737.5" y2="91.5"/>
<line x1="743.5" y1="78" x2="743.5" y2="91.5"/>
<line x1="749.5" y1="88" x2="749.5" y2="91.5"/>
<line x1="755.5" y1="88" x2="755.5" y2="91.5"/>
<line x1="761.5" y1="88" x2="761.5" y2="91.5"/>
<line x1="767.5" y1="88" x2="767.5" y2="91.5"/>
<line x1="773.5" y1="84" x2="773.5" y2="91.5"/>
<line x1="779.5" y1="88" x2="779.5" y2="91.5"/>
<line x1="785.5" y1="88" x2="785.5" y2="91.5"/>
<line x1="791.5" y1="88" x2="791.5" y2="91.5"/>
<line x1="797.5" y1="88" x2="797.5" y2="91.5"/>
<line x1="803.5" y1="78" x2="803.5" y2="91.5"/>
<line x1="809.5" y1="88" x2="809.5" y2="91.5"/>
<line x1="815.5" y1="88" x2="815.5" y2="91.5"/>
<line x1="821.5" y1="88" x2="821.5" y2="91.5"/>
<line x1="827.5" y1="88" x2="827.5" y2="91.5"/>
<line x1="833.5" y1="84" x2="833.5" y2="91.5"/>
<line x1="839.5" y1="88" x2="839.5" y2="91.5"/>
<line x1="845.5" y1="88" x2="845.5" y2="91.5"/>
<line x1="851.5" y1="88" x2="851.5" y2="91.5"/>
<line x1="857.5" y1="88" x2="857.5" y2="91.5"/>
<line x1="863.5" y1="78" x2="863.5" y2="91.5"/>
<line x1="869.5" y1="88" x2="869.5" y2="91.5"/>
<line x1="875.5" y1="88" x2="875.5" y2="91.5"/>
<line x1="881.5" y1="88" x2="881.5" y2="91.5"/>
<line x1="887.5" y1="88" x2="887.5" y2="91.5"/>
<line x1="893.5" y1="84" x2="893.5" y2="91.5"/>
<line x1="899.5" y1="88" x2="899.5" y2="91.5"/>
<line x1="905.5" y1="88" x2="905.5" y2="91.5"/>
<line x1="911.5" y1="88" x2="911.5" y2="91.5"/>
<line x1="917.5" y1="88" x2="917.5" y2="91.5"/>
<line x1="923.5" y1="78" x2="923.5" y2="91.5"/>
<line x1="929.5" y1="88" x2="929.5" y2="91.5"/>
<line x1="935.5" y1="88" x2="935.5" y2="91.5"/>
<line x1="941.5" y1="88" x2="941.5" y2="91.5"/>
<line x1="947.5" y1="88" x2="947.5" y2="91.5"/>
<line x1="953.5" y1="84" x2="953.5" y2="91.5"/>
<line x1="959.5" y1="88" x2="959.5" y2="91.5"/>
<line x1="965.5" y1="88" x2="965.5" y2="91.5"/>
<line x1="971.5" y1="88" x2="971.5" y2="91.5"/>
<line x1="977.5" y1="88" x2="977.5" y2="91.5"/>
<line x1="983.5" y1="78" x2="983.5" y2="91.5"/>
<line x1="989.5" y1="88" x2="989.5" y2="91.5"/>
<line x1="995.5" y1="88" x2="995.5" y2="91.5"/>
<line x1="1001.5" y1="88" x2="1001.5" y2="91.5"/>
<line x1="1007.5" y1="88" x2="1007.5" y2="91.5"/>
<line x1="1013.5" y1="84" x2="1013.5" y2="91.5"/>
<line x1="1019.5" y1="88" x2="1019.5" y2="91.5"/>
<line x1="1025.5" y1="88" x2="1025.5" y2="91.5"/>
<line x1="1031.5" y1="88" x2="1031.5" y2="91.5"/>
<line x1="1037.5" y1="88" x2="1037.5" y2="91.5"/>
<line x1="1043.5" y1="78" x2="1043.5" y2="91.5"/>
<line x1="1049.5" y1="88" x2="1049.5" y2="91.5"/>
<line x1="1055.5" y1="88" x2="1055.5" y2="91.5"/>
<line x1="1061.5" y1="88" x2="1061.5" y2="91.5"/>
<line x1="1067.5" y1="88" x2="1067.5" y2="91.5"/>
<line x1="1073.5" y1="84" x2="1073.5" y2="91.5"/>
<line x1="1079.5" y1="88" x2="1079.5" y2="91.5"/>
<line x1="1085.5" y1="88" x2="1085.5" y2="91.5"/>
<line x1="1091.5" y1="88" x2="1091.5" y2="91.5"/>
<line x1="1097.5" y1="88" x2="1097.5" y2="91.5"/>
<line x1="1103.5" y1="78" x2="1103.5" y2="91.5"/>
<line x1="1109.5" y1="88" x2="1109.5" y2="91.5"/>
<line x1="1115.5" y1="88" x2="1115.5" y2="91.5"/>
<line x1="1121.5" y1="88" x2="1121.5" y2="91.5"/>
<line x1="1127.5" y1="88" x2="1127.5" y2="91.5"/>
<line x1="1133.5" y1="84" x2="1133.5" y2="91.5"/>
<line x1="1139.5" y1="88" x2="1139.5" y2="91.5"/>
<line x1="1145.5" y1="88" x2="1145.5" y2="91.5"/>
<line x1="1151.5" y1="88" x2="1151.5" y2="91.5"/>
<line x1="1157.5" y1="88" x2="1157.5" y2="91.5"/>
<line x1="1163.5" y1="78" x2="1163.5" y2="91.5"/>
<line x1="1169.5" y1="88" x2="1169.5" y2="91.5"/>
<line x1="1175.5" y1="88" x2="1175.5" y2="91.5"/>
<line x1="1181.5" y1="88" x2="1181.5" y2="91.5"/>
<line x1="1187.5" y1="88" x2="1187.5" y2="91.5"/>
<line x1="1193.5" y1="84" x2="1193.5" y2="91.5"/>
<line x1="1199.5" y1="88" x2="1199.5" y2="91.5"/>
<line x1="1205.5" y1="88" x2="1205.5" y2="91.5"/>
<line x1="1211.5" y1="88" x2="1211.5" y2="91.5"/>
<line x1="1217.5" y1="88" x2="1217.5" y2="91.5"/>
<line x1="1223.5" y1="78" x2="1223.5" y2="91.5"/>
<line x1="1229.5" y1="88" x2="1229.5" y2="91.5"/>
<line x1="1235.5" y1="88" x2="1235.5" y2="91.5"/>
<line x1="1241.5" y1="88" x2="1241.5" y2="91.5"/>
<line x1="1247.5" y1="88" x2="1247.5" y2="91.5"/>
<line x1="1253.5" y1="84" x2="1253.5" y2="91.5"/>
<line x1="1259.5" y1="88" x2="1259.5" y2="91.5"/>
<line x1="112" y1="902.5" x2="119.5" y2="902.5"/>
<line x1="116" y1="896.5" x2="119.5" y2="896.5"/>
<line x1="116" y1="890.5" x2="119.5" y2="890.5"/>
<line x1="116" y1="884.5" x2="119.5" y2="884.5"/>
<line x1="116" y1="878.5" x2="119.5" y2="878.5"/>
<line x1="104" y1="872.5" x2="119.5" y2="872.5"/>
<line x1="116" y1="866.5" x2="119.5" y2="866.5"/>
<line x1="116" y1="860.5" x2="119.5" y2="860.5"/>
<line x1="116" y1="854.5" x2="119.5" y2="854.5"/>
<line x1="116" y1="848.5" x2="119.5" y2="848.5"/>
<line x1="112" y1="842.5" x2="119.5" y2="842.5"/>
<line x1="116" y1="836.5" x2="119.5" y2="836.5"/>
<line x1="116" y1="830.5" x2="119.5" y2="830.5"/>
<line x1="116" y1="824.5" x2="119.5" y2="824.5"/>
<line x1="116" y1="818.5" x2="119.5" y2="818.5"/>
<line x1="104" y1="812.5" x2="119.5" y2="812.5"/>
<line x1="116" y1="806.5" x2="119.5" y2="806.5"/>
<line x1="116" y1="800.5" x2="119.5" y2="800.5"/>
<line x1="116" y1="794.5" x2="119.5" y2="794.5"/>
<line x1="116" y1="788.5" x2="119.5" y2="788.5"/>
<line x1="112" y1="782.5" x2="119.5" y2="782.5"/>
<line x1="116" y1="776.5" x2="119.5" y2="776.5"/>
<line x1="116" y1="770.5" x2="119.5" y2="770.5"/>
<line x1="116" y1="764.5" x2="119.5" y2="764.5"/>
<line x1="116" y1="758.5" x2="119.5" y2="758.5"/>
<line x1="104" y1="752.5" x2="119.5" y2="752.5"/>
<line x1="116" y1="746.5" x2="119.5" y2="746.5"/>
<line x1="116" y1="740.5" x2="119.5" y2="740.5"/>
<line x1="116" y1="734.5" x2="119.5" y2="734.5"/>
<line x1="116" y1="728.5" x2="119.5" y2="728.5"/>
<line x1="112" y1="722.5" x2="119.5" y2="722.5"/>
<line x1="116" y1="716.5" x2="119.5" y2="716.5"/>
<line x1="116" y1="710.5" x2="119.5" y2="710.5"/>
<line x1="116" y1="704.5" x2="119.5" y2="704.5"/>
<line x1="116" y1="698.5" x2="119.5" y2="698.5"/>
<line x1="104" y1="692.5" x2="119.5" y2="692.5"/>
<line x1="116" y1="686.5" x2="119.5" y2="686.5"/>
<line x1="116" y1="680.5" x2="119.5" y2="680.5"/>
<line x1="116" y1="674.5" x2="119.5" y2="674.5"/>
<line x1="116" y1="668.5" x2="119.5" y2="668.5"/>
<line x1="112" y1="662.5" x2="119.5" y2="662.5"/>
<line x1="116" y1="656.5" x2="119.5" y2="656.5"/>
<line x1="116" y1="650.5" x2="119.5" y2="650.5"/>
<line x1="116" y1="644.5" x2="119.5" y2="644.5"/>
<line x1="116" y1="638.5" x2="119.5" y2="638.5"/>
<line x1="104" y1="632.5" x2="119.5" y2="632.5"/>
<line x1="116" y1="626.5" x2="119.5" y2="626.5"/>
<line x1="116" y1="620.5" x2="119.5" y2="620.5"/>
<line x1="116" y1="614.5" x2="119.5" y2="614.5"/>
<line x1="116" y1="608.5" x2="119.5" y2="608.5"/>
<line x1="112" y1="602.5" x2="119.5" y2="602.5"/>
<line x1="116" y1="596.5" x2="119.5" y2="596.5"/>
<line x1="116" y1="590.5" x2="119.5" y2="590.5"/>
<line x1="116" y1="584.5" x2="119.5" y2="584.5"/>
<line x1="116" y1="578.5" x2="119.5" y2="578.5"/>
<line x1="104" y1="572.5" x2="119.5" y2="572.5"/>
<line x1="116" y1="566.5" x2="119.5" y2="566.5"/>
<line x1="116" y1="560.5" x2="119.5" y2="560.5"/>
<line x1="116" y1="554.5" x2="119.5" y2="554.5"/>
<line x1="116" y1="548.5" x2="119.5" y2="548.5"/>
<line x1="112" y1="542.5" x2="119.5" y2="542.5"/>
<line x1="116" y1="536.5" x2="119.5" y2="536.5"/>
<line x1="116" y1="530.5" x2="119.5" y2="530.5"/>
<line x1="116" y1="524.5" x2="119.5" y2="524.5"/>
<line x1="116" y1="518.5" x2="119.5" y2="518.5"/>
<line x1="104" y1="512.5" x2="119.5" y2="512.5"/>
<line x1="116" y1="506.5" x2="119.5" y2="506.5"/>
<line x1="116" y1="500.5" x2="119.5" y2="500.5"/>
<line x1="116" y1="494.5" x2="119.5" y2="494.5"/>
<line x1="116" y1="488.5" x2="119.5" y2="488.5"/>
<line x1="112" y1="482.5" x2="119.5" y2="482.5"/>
<line x1="116" y1="476.5" x2="119.5" y2="476.5"/>
<line x1="116" y1="470.5" x2="119.5" y2="470.5"/>
<line x1="116" y1="464.5" x2="119.5" y2="464.5"/>
<line x1="116" y1="458.5" x2="119.5" y2="458.5"/>
<line x1="104" y1="452.5" x2="119.5" y2="452.5"/>
<line x1="116" y1="446.5" x2="119.5" y2="446.5"/>
<line x1="116" y1="440.5" x2="119.5" y2="440.5"/>
<line x1="116" y1="434.5" x2="119.5" y2="434.5"/>
<line x1="116" y1="428.5" x2="119.5" y2="428.5"/>
<line x1="112" y1="422.5" x2="119.5" y2="422.5"/>
<line x1="116" y1="416.5" x2="119.5" y2="416.5"/>
<line x1="116" y1="410.5" x2="119.5" y2="410.5"/>
<line x1="116" y1="404.5" x2="119.5" y2="404.5"/>
<line x1="116" y1="398.5" x2="119.5" y2="398.5"/>
<line x1="104" y1="392.5" x2="119.5" y2="392.5"/>
<line x1="116" y1="386.5" x2="119.5" y2="386.5"/>
<line x1="116" y1="380.5" x2="119.5" y2="380.5"/>
<line x1="116" y1="374.5" x2="119.5" y2="374.5"/>
<line x1="116" y1="368.5" x2="119.5" y2="368.5"/>
<line x1="112" y1="362.5" x2="119.5" y2="362.5"/>
<line x1="116" y1="356.5" x2="119.5" y2="356.5"/>
<line x1="116" y1="350.5" x2="119.5" y2="350.5"/>
<line x1="116" y1="344.5" x2="119.5" y2="344.5"/>
<line x1="116" y1="338.5" x2="119.5" y2="338.5"/>
<line x1="104" y1="332.5" x2="119.5" y2="332.5"/>
<line x1="116" y1="326.5" x2="119.5" y2="326.5"/>
<line x1="116" y1="320.5" x2="119.5" y2="320.5"/>
<line x1="116" y1="314.5" x2="119.5" y2="314.5"/>
<line x1="116" y1="308.5" x2="119.5" y2="308.5"/>
<line x1="112" y1="302.5" x2="119.5" y2="302.5"/>
<line x1="116" y1="296.5" x2="119.5" y2="296.5"/>
<line x1="116" y1="290.5" x2="119.5" y2="290.5"/>
<line x1="116" y1="284.5" x2="119.5" y2="284.5"/>
<line x1="116" y1="278.5" x2="119.5" y2="278.5"/>
<line x1="104" y1="272.5" x2="119.5" y2="272.5"/>
<line x1="116" y1="266.5" x2="119.5" y2="266.5"/>
<line x1="116" y1="260.5" x2="119.5" y2="260.5"/>
<line x1="116" y1="254.5" x2="119.5" y2="254.5"/>
<line x1="116" y1="248.5" x2="119.5" y2="248.5"/>
<line x1="112" y1="242.5" x2="119.5" y2="242.5"/>
<line x1="116" y1="236.5" x2="119.5" y2="236.5"/>
<line x1="116" y1="230.5" x2="119.5" y2="230.5"/>
<line x1="116" y1="224.5" x2="119.5" y2="224.5"/>
<line x1="116" y1="218.5" x2="119.5" y2="218.5"/>
<line x1="104" y1="212.5" x2="119.5" y2="212.5"/>
<line x1="116" y1="206.5" x2="119.5" y2="206.5"/>
<line x1="116" y1="200.5" x2="119.5" y2="200.5"/>
<line x1="116" y1="194.5" x2="119.5" y2="194.5"/>
<line x1="116" y1="188.5" x2="119.5" y2="188.5"/>
<line x1="112" y1="182.5" x2="119.5" y2="182.5"/>
<line x1="116" y1="176.5" x2="119.5" y2="176.5"/>
<line x1="116" y1="170.5" x2="119.5" y2="170.5"/>
<line x1="116" y1="164.5" x2="119.5" y2="164.5"/>
<line x1="116" y1="158.5" x2="119.5" y2="158.5"/>
<line x1="104" y1="152.5" x2="119.5" y2="152.5"/>
<line x1="116" y1="146.5" x2="119.5" y2="146.5"/>
<line x1="116" y1="140.5" x2="119.5" y2="140.5"/>
<line x1="116" y1="134.5" x2="119.5" y2="134.5"/>
<line x1="116" y1="128.5" x2="119.5" y2="128.5"/>
<line x1="112" y1="122.5" x2="119.5" y2="122.5"/>
<line x1="116" y1="116.5" x2="119.5" y2="116.5"/>
<line x1="116" y1="110.5" x2="119.5" y2="110.5"/>
<line x1="116" y1="104.5" x2="119.5" y2="104.5"/>
<line x1="116" y1="98.5" x2="119.5" y2="98.5"/>
<line x1="104" y1="92.5" x2="119.5" y2="92.5"/>
</g>
<g font-size="10" fill="#000">
<text x="100.7" y="85.8" textLength="15.6" lengthAdjust="spacingAndGlyphs">mm</text>
<text x="147.3" y="84.9">60</text>
<text x="207.3" y="84.9">70</text>
<text x="267.3" y="84.9">80</text>
<text x="327.3" y="84.9">90</text>
<text x="387.3" y="84.9">100</text>
<text x="447.3" y="84.9">110</text>
<text x="507.3" y="84.9">120</text>
<text x="567.3" y="84.9">130</text>
<text x="627.3" y="84.9">140</text>
<text x="687.3" y="84.9">150</text>
<text x="747.3" y="84.9">160</text>
<text x="807.3" y="84.9">170</text>
<text x="867.3" y="84.9">180</text>
<text x="927.3" y="84.9">190</text>
<text x="987.3" y="84.9">200</text>
<text x="1047.3" y="84.9">210</text>
<text x="1107.3" y="84.9">220</text>
<text x="1167.3" y="84.9">230</text>
<text x="1227.3" y="84.9">240</text>
<text transform="translate(111,876.7) rotate(-90)" text-anchor="end">80</text>
<text transform="translate(111,816.7) rotate(-90)" text-anchor="end">70</text>
<text transform="translate(111,756.7) rotate(-90)" text-anchor="end">60</text>
<text transform="translate(111,696.7) rotate(-90)" text-anchor="end">50</text>
<text transform="translate(111,636.7) rotate(-90)" text-anchor="end">40</text>
<text transform="translate(111,576.7) rotate(-90)" text-anchor="end">30</text>
<text transform="translate(111,516.7) rotate(-90)" text-anchor="end">20</text>
<text transform="translate(111,456.7) rotate(-90)" text-anchor="end">10</text>
<text transform="translate(111,396.7) rotate(-90)" text-anchor="end">0</text>
<text transform="translate(111,336.7) rotate(-90)" text-anchor="end">10</text>
<text transform="translate(111,276.7) rotate(-90)" text-anchor="end">20</text>
<text transform="translate(111,216.7) rotate(-90)" text-anchor="end">30</text>
<text transform="translate(111,156.7) rotate(-90)" text-anchor="end">40</text>
<text transform="translate(111,96.7) rotate(-90)" text-anchor="end">50</text>
</g>
</g>
<svg x="121" y="93" width="1138" height="810" viewBox="121 93 1138 810">
<g id="tracks">
<polyline points="316,314.5 328.5,299 570,299 579.5,313.5" fill="none" stroke="#00bb00" stroke-width="9.5" stroke-linecap="round" stroke-linejoin="round"/>
<polygon points="355,303 389,303 376,316.5 376,329.4 364,329.4 364,316.5" fill="#00bb00"/>
<polygon points="408,303 432,303 424.5,313 413.5,313" fill="#00bb00"/>
<polyline points="419,308 419,315" fill="none" stroke="#00bb00" stroke-width="11" stroke-linecap="round" stroke-linejoin="round"/>
<polyline points="316,360.5 316,381 311.5,385.5 288,385.5 260.8,412.7 260.8,445 300,484" fill="none" stroke="#00bb00" stroke-width="9" stroke-linecap="round" stroke-linejoin="round"/>
<polyline points="370,359.5 370,405.7" fill="none" stroke="#00bb00" stroke-width="12" stroke-linecap="butt" stroke-linejoin="round"/>
<polyline points="376,401 302,401 276.4,426.6 276.4,442 300,465.6 301,486" fill="none" stroke="#00bb00" stroke-width="9.4" stroke-linecap="butt" stroke-linejoin="round"/>
<polyline points="419,376 419,400 403.5,416 308,416 293,431 293,440 309,456 301,486" fill="none" stroke="#00bb00" stroke-width="9" stroke-linecap="round" stroke-linejoin="round"/>
<polyline points="311,439 354,439" fill="none" stroke="#00bb00" stroke-width="9.5" stroke-linecap="round" stroke-linejoin="round"/>
<polyline points="354.5,463.8 320.5,464 301,484" fill="none" stroke="#00bb00" stroke-width="9" stroke-linecap="round" stroke-linejoin="round"/>
<polyline points="303,479.3 341.5,479.3 362,496" fill="none" stroke="#00bb00" stroke-width="9" stroke-linecap="round" stroke-linejoin="round"/>
<polyline points="308,479 345,516 410,516 419,525 419,553" fill="none" stroke="#00bb00" stroke-width="9" stroke-linecap="round" stroke-linejoin="round"/>
<polyline points="301,486 346,531 362.5,531 371,539.5 371,567" fill="none" stroke="#00bb00" stroke-width="9" stroke-linecap="round" stroke-linejoin="round"/>
<polyline points="300.5,497 315.5,527 315.5,559" fill="none" stroke="#00bb00" stroke-width="9" stroke-linecap="round" stroke-linejoin="round"/>
<polyline points="301,497 288.5,509.5 294,521 294,634 307.5,647.5 752,647.5 761.4,638 761.4,498.4" fill="none" stroke="#00bb00" stroke-width="9" stroke-linecap="round" stroke-linejoin="round"/>
<circle cx="301" cy="486" r="18" fill="#00bb00"/>
<polyline points="315.5,605 315.5,626 321,631.5 569.5,631.5 580,621 580,614.4" fill="none" stroke="#00bb00" stroke-width="9" stroke-linecap="round" stroke-linejoin="round"/>
<polyline points="370,598 370,633" fill="none" stroke="#00bb00" stroke-width="12" stroke-linecap="butt" stroke-linejoin="round"/>
<polyline points="419,614 419,618 432.5,631.5" fill="none" stroke="#00bb00" stroke-width="9" stroke-linecap="round" stroke-linejoin="round"/>
<polyline points="459,315.5 493,315" fill="none" stroke="#00bb00" stroke-width="7.5" stroke-linecap="round" stroke-linejoin="round"/>
<polyline points="475,315.5 475,337 481,343 517,343" fill="none" stroke="#00bb00" stroke-width="9" stroke-linecap="round" stroke-linejoin="round"/>
<polyline points="558,343 578,343 586.5,351.5 586.5,411" fill="none" stroke="#00bb00" stroke-width="9" stroke-linecap="round" stroke-linejoin="round"/>
<polyline points="459,377 459,411" fill="none" stroke="#00bb00" stroke-width="9" stroke-linecap="round" stroke-linejoin="round"/>
<polyline points="459,425.6 511,425.6 516.5,431 516.5,487" fill="none" stroke="#00bb00" stroke-width="9" stroke-linecap="round" stroke-linejoin="round"/>
<polyline points="516.5,522 516.5,554 534.5,572 534.5,631.5" fill="none" stroke="#00bb00" stroke-width="9" stroke-linecap="round" stroke-linejoin="round"/>
<polyline points="415,438.6 429,439 438.5,449 438.5,463.5" fill="none" stroke="#00bb00" stroke-width="9" stroke-linecap="round" stroke-linejoin="round"/>
<polyline points="415,463.5 459,463.5" fill="none" stroke="#00bb00" stroke-width="9" stroke-linecap="round" stroke-linejoin="round"/>
<polyline points="446,463.5 459,450" fill="none" stroke="#00bb00" stroke-width="9" stroke-linecap="round" stroke-linejoin="round"/>
<polyline points="446,463.5 459,477" fill="none" stroke="#00bb00" stroke-width="9" stroke-linecap="round" stroke-linejoin="round"/>
<polyline points="459,440 459,488" fill="none" stroke="#00bb00" stroke-width="9" stroke-linecap="round" stroke-linejoin="round"/>
<polyline points="407,496 438.5,464.5" fill="none" stroke="#00bb00" stroke-width="9" stroke-linecap="round" stroke-linejoin="round"/>
<polyline points="459,502.4 528,502.4 535.5,495 535.5,299" fill="none" stroke="#00bb00" stroke-width="9" stroke-linecap="round" stroke-linejoin="round"/>
<polyline points="459,517.6 459,553.6" fill="none" stroke="#00bb00" stroke-width="9" stroke-linecap="round" stroke-linejoin="round"/>
<polyline points="460,614.4 493,614.4" fill="none" stroke="#00bb00" stroke-width="7.5" stroke-linecap="round" stroke-linejoin="round"/>
<polyline points="476,614.4 476,596 489,583 516,583" fill="none" stroke="#00bb00" stroke-width="9" stroke-linecap="round" stroke-linejoin="round"/>
<polyline points="557,583 578,583 585.5,575.5 585.5,517" fill="none" stroke="#00bb00" stroke-width="9" stroke-linecap="round" stroke-linejoin="round"/>
<polyline points="579,314.6 615,314.6" fill="none" stroke="#00bb00" stroke-width="7.5" stroke-linecap="round" stroke-linejoin="round"/>
<polyline points="580,614.4 616,614.4" fill="none" stroke="#00bb00" stroke-width="8" stroke-linecap="round" stroke-linejoin="round"/>
<polyline points="622.5,342.8 647,342.8 676,314.3 702.5,315" fill="none" stroke="#00bb00" stroke-width="8.5" stroke-linecap="round" stroke-linejoin="round"/>
<polyline points="622.5,403.5 622.5,383.5 637,368.4 669.5,368.4 693,344.6 819,344.2" fill="none" stroke="#00bb00" stroke-width="8.5" stroke-linecap="round" stroke-linejoin="round"/>
<polyline points="587,425.6 614,425.6 623,416.5 622.5,403.5" fill="none" stroke="#00bb00" stroke-width="9" stroke-linecap="round" stroke-linejoin="round"/>
<polyline points="587,440 652,440 662,449" fill="none" stroke="#00bb00" stroke-width="9" stroke-linecap="round" stroke-linejoin="round"/>
<polyline points="657,402.5 657,440" fill="none" stroke="#00bb00" stroke-width="9" stroke-linecap="round" stroke-linejoin="round"/>
<polyline points="585,487 653,487 662,478" fill="none" stroke="#00bb00" stroke-width="9" stroke-linecap="round" stroke-linejoin="round"/>
<polyline points="657,487 657,522" fill="none" stroke="#00bb00" stroke-width="9" stroke-linecap="round" stroke-linejoin="round"/>
<polyline points="585,501.6 614,501.6 623,511 623,525 645.5,554.2 728,554.2 736.6,545 736.6,488 746,478.2 805,478.2 818,491 818,522" fill="none" stroke="#00bb00" stroke-width="9" stroke-linecap="round" stroke-linejoin="round"/>
<polyline points="736.6,545 740.5,554 740.5,575" fill="none" stroke="#00bb00" stroke-width="9" stroke-linecap="round" stroke-linejoin="round"/>
<polyline points="662,463.4 748,463.4 760.4,451" fill="none" stroke="#00bb00" stroke-width="9" stroke-linecap="round" stroke-linejoin="round"/>
<polyline points="760.4,412 760.4,455.4 907,455.4" fill="none" stroke="#00bb00" stroke-width="9" stroke-linecap="round" stroke-linejoin="round"/>
<polyline points="913,426 907,433 907,456 913,463.6" fill="none" stroke="#00bb00" stroke-width="8.5" stroke-linecap="round" stroke-linejoin="round"/>
<polyline points="718.6,403 718.6,522" fill="none" stroke="#00bb00" stroke-width="9" stroke-linecap="round" stroke-linejoin="round"/>
<polyline points="748,331 748,344.5" fill="none" stroke="#00bb00" stroke-width="6" stroke-linecap="round" stroke-linejoin="round"/>
<polyline points="748,377 748,366 755,358.6 819,358.6 922,359.6" fill="none" stroke="#00bb00" stroke-width="9" stroke-linecap="round" stroke-linejoin="round"/>
<polyline points="819,372 819,381 825,387 920,387.5" fill="none" stroke="#00bb00" stroke-width="9" stroke-linecap="round" stroke-linejoin="round"/>
<polyline points="958,360 1003,360 1006.6,357 1006.6,338 1045,300 1142,300" fill="none" stroke="#00bb00" stroke-width="9" stroke-linecap="round" stroke-linejoin="round"/>
<polyline points="1006.6,360 1014,368 1014,383" fill="none" stroke="#00bb00" stroke-width="9" stroke-linecap="round" stroke-linejoin="round"/>
<polyline points="957,389.4 960,389.4 975,404.5 1034,404.5 1051.5,387 1051.5,347 1058,340.2 1142,340.2" fill="none" stroke="#00bb00" stroke-width="9" stroke-linecap="round" stroke-linejoin="round"/>
<circle cx="478.8" cy="249.6" r="17.8" fill="#00bb00"/>
<polyline points="479,245.5 589,245.5" fill="none" stroke="#00bb00" stroke-width="31" stroke-linecap="butt" stroke-linejoin="round"/>
<circle cx="588.9" cy="249.4" r="26.9" fill="#00bb00"/>
<circle cx="684.4" cy="250.9" r="27" fill="#00bb00"/>
<polyline points="684,252 905,252" fill="none" stroke="#00bb00" stroke-width="31" stroke-linecap="butt" stroke-linejoin="round"/>
<polygon points="892,236.5 917,236.5 938.4,258 938.4,328 934.2,328 926,319.8 892,319.8" fill="#00bb00"/>
<circle cx="935" cy="258.4" r="5.5" fill="#00bb00"/>
<polyline points="708,310 900,310" fill="none" stroke="#00bb00" stroke-width="19.6" stroke-linecap="butt" stroke-linejoin="round"/>
<polygon points="700,316 712,300.2 712,319.8 700,319.8" fill="#00bb00"/>
<polyline points="938.6,323 938.6,470 966,497.5 974,501.6" fill="none" stroke="#00bb00" stroke-width="9" stroke-linecap="round" stroke-linejoin="round"/>
<polyline points="959,426 968,430" fill="none" stroke="#00bb00" stroke-width="9" stroke-linecap="round" stroke-linejoin="round"/>
<polyline points="973.4,463.6 973.4,434 982,425.4 1180,425.4" fill="none" stroke="#00bb00" stroke-width="9" stroke-linecap="round" stroke-linejoin="round"/>
<polyline points="1014,469.6 1014,614 1000,630.2 940,630.2" fill="none" stroke="#00bb00" stroke-width="9" stroke-linecap="round" stroke-linejoin="round"/>
<polyline points="1146.2,520 1146.2,454 1138,446.2 1003,446.2 996.2,453 996.2,540 980,556" fill="none" stroke="#00bb00" stroke-width="9" stroke-linecap="round" stroke-linejoin="round"/>
<polyline points="785.2,575 785.2,547 798,536.2 956,536.2 973.4,554 973.4,588.6" fill="none" stroke="#00bb00" stroke-width="9" stroke-linecap="round" stroke-linejoin="round"/>
<polyline points="817.6,550 817.6,600 826,609.2 992,609.2" fill="none" stroke="#00bb00" stroke-width="9" stroke-linecap="round" stroke-linejoin="round"/>
<polyline points="1036,607 1036,567 1048.5,554.5 1100,554.5" fill="none" stroke="#00bb00" stroke-width="9" stroke-linecap="round" stroke-linejoin="round"/>
<polygon points="1090,560 1108,542 1160,542 1160,566 1128,566 1118,576 1118,676 1108.5,686 1095.5,686 1090,676" fill="#00bb00"/>
<circle cx="1102" cy="686" r="6.5" fill="#00bb00"/>
<polyline points="1155,585.8 1180,585.8" fill="none" stroke="#00bb00" stroke-width="20.4" stroke-linecap="butt" stroke-linejoin="round"/>
<polyline points="1155,370 1182,370" fill="none" stroke="#00bb00" stroke-width="22" stroke-linecap="butt" stroke-linejoin="round"/>
<polyline points="1190.5,375.5 1190.5,596" fill="none" stroke="#00bb00" stroke-width="33" stroke-linecap="butt" stroke-linejoin="round"/>
<circle cx="1190.5" cy="375.5" r="16.5" fill="#00bb00"/>
<polyline points="1192,596 1192,700" fill="none" stroke="#00bb00" stroke-width="30" stroke-linecap="butt" stroke-linejoin="round"/>
<polygon points="1098,253 1116,235 1180,235 1194,250 1194,330 1181,345 1160,345 1160,325 1174,325 1174,269 1164,258 1112,258 1106,264" fill="#00bb00"/>
<circle cx="1103" cy="258.4" r="6.5" fill="#00bb00"/>
<circle cx="478.2" cy="699.6" r="17.7" fill="#00bb00"/>
<polyline points="478,699.7 590,699.7" fill="none" stroke="#00bb00" stroke-width="27.6" stroke-linecap="butt" stroke-linejoin="round"/>
<circle cx="590.2" cy="698.6" r="26.8" fill="#00bb00"/>
<circle cx="685.3" cy="700" r="27" fill="#00bb00"/>
<polygon points="685,678 908,678 908,647 787,647 779,632 781,626.4 945,626 945,680 912,718 685,718" fill="#00bb00"/>
<polyline points="703,614.4 712,614.4 727,630" fill="none" stroke="#00bb00" stroke-width="7.5" stroke-linecap="round" stroke-linejoin="round"/>
<polyline points="623,583 646,583 677.5,614.4 703,614.4" fill="none" stroke="#00bb00" stroke-width="8.5" stroke-linecap="round" stroke-linejoin="round"/>
<circle cx="301.6" cy="691" r="19" fill="#00bb00"/>
<polygon points="292.4,691 321.8,691 321.8,721.4 341,740.6 362,740.6 362,770.4 333,770.4 326,767.4 292.4,731.5" fill="#00bb00"/>
<polyline points="360,755.5 1116,755.5" fill="none" stroke="#00bb00" stroke-width="29.8" stroke-linecap="butt" stroke-linejoin="round"/>
<polygon points="1177,690 1207,690 1207,706 1154,760 1116,770.4 1100,770.4 1100,740.6 1114,740.6 1138,735 1177,698" fill="#00bb00"/>
<circle cx="316" cy="314.5" r="6.2" fill="#00bb00"/>
<circle cx="316" cy="360.5" r="6.2" fill="#00bb00"/>
<circle cx="419" cy="315" r="6.2" fill="#00bb00"/>
<circle cx="419" cy="376" r="6.2" fill="#00bb00"/>
<circle cx="459" cy="315.5" r="6.2" fill="#00bb00"/>
<circle cx="459" cy="377" r="6.2" fill="#00bb00"/>
<circle cx="493" cy="315" r="6.2" fill="#00bb00"/>
<circle cx="579" cy="314.6" r="6.2" fill="#00bb00"/>
<circle cx="615" cy="314.6" r="6.2" fill="#00bb00"/>
<circle cx="702.5" cy="315" r="6.2" fill="#00bb00"/>
<circle cx="459" cy="411" r="6.2" fill="#00bb00"/>
<circle cx="459" cy="425.6" r="6.2" fill="#00bb00"/>
<circle cx="459" cy="440" r="6.2" fill="#00bb00"/>
<circle cx="459" cy="488" r="6.2" fill="#00bb00"/>
<circle cx="459" cy="502.4" r="6.2" fill="#00bb00"/>
<circle cx="459" cy="517.6" r="6.2" fill="#00bb00"/>
<circle cx="459" cy="553.6" r="6.2" fill="#00bb00"/>
<circle cx="460" cy="614.4" r="6.2" fill="#00bb00"/>
<circle cx="493" cy="614.4" r="6.2" fill="#00bb00"/>
<circle cx="580" cy="614.4" r="6.2" fill="#00bb00"/>
<circle cx="616" cy="614.4" r="6.2" fill="#00bb00"/>
<circle cx="703" cy="614.4" r="6.2" fill="#00bb00"/>
<circle cx="311" cy="439" r="6.2" fill="#00bb00"/>
<circle cx="354" cy="439" r="6.2" fill="#00bb00"/>
<circle cx="415" cy="438.6" r="6.2" fill="#00bb00"/>
<circle cx="354.5" cy="463.8" r="6.2" fill="#00bb00"/>
<circle cx="415" cy="463.5" r="6.2" fill="#00bb00"/>
<circle cx="362" cy="496" r="6.2" fill="#00bb00"/>
<circle cx="407" cy="496" r="6.2" fill="#00bb00"/>
<circle cx="315.5" cy="559" r="6.2" fill="#00bb00"/>
<circle cx="315.5" cy="605" r="6.2" fill="#00bb00"/>
<circle cx="419" cy="553" r="6.2" fill="#00bb00"/>
<circle cx="419" cy="614" r="6.2" fill="#00bb00"/>
<circle cx="587" cy="411" r="6.2" fill="#00bb00"/>
<circle cx="587" cy="425.6" r="6.2" fill="#00bb00"/>
<circle cx="587" cy="440" r="6.2" fill="#00bb00"/>
<circle cx="585" cy="487" r="6.2" fill="#00bb00"/>
<circle cx="585" cy="501.6" r="6.2" fill="#00bb00"/>
<circle cx="585" cy="517" r="6.2" fill="#00bb00"/>
<circle cx="622.5" cy="342.8" r="6.2" fill="#00bb00"/>
<circle cx="622.5" cy="403.5" r="6.2" fill="#00bb00"/>
<circle cx="623" cy="522.4" r="6.2" fill="#00bb00"/>
<circle cx="623" cy="583" r="6.2" fill="#00bb00"/>
<circle cx="657" cy="402.5" r="6.2" fill="#00bb00"/>
<circle cx="718.6" cy="403" r="6.2" fill="#00bb00"/>
<circle cx="657" cy="522" r="6.2" fill="#00bb00"/>
<circle cx="718.6" cy="522" r="6.2" fill="#00bb00"/>
<circle cx="748" cy="331" r="6.2" fill="#00bb00"/>
<circle cx="748" cy="377" r="6.2" fill="#00bb00"/>
<circle cx="819" cy="343.6" r="6.2" fill="#00bb00"/>
<circle cx="819" cy="358.4" r="6.2" fill="#00bb00"/>
<circle cx="819" cy="372" r="6.2" fill="#00bb00"/>
<circle cx="760.4" cy="412" r="6.2" fill="#00bb00"/>
<circle cx="760.4" cy="498.4" r="6.2" fill="#00bb00"/>
<circle cx="817" cy="522" r="6.2" fill="#00bb00"/>
<circle cx="817" cy="536.2" r="6.2" fill="#00bb00"/>
<circle cx="817" cy="550" r="6.2" fill="#00bb00"/>
<circle cx="740.5" cy="575.6" r="6.2" fill="#00bb00"/>
<circle cx="786" cy="575.6" r="6.2" fill="#00bb00"/>
<circle cx="913" cy="426" r="6.2" fill="#00bb00"/>
<circle cx="959" cy="426" r="6.2" fill="#00bb00"/>
<circle cx="913" cy="463.6" r="6.2" fill="#00bb00"/>
<circle cx="973.4" cy="463.6" r="6.2" fill="#00bb00"/>
<circle cx="1014" cy="383" r="6.2" fill="#00bb00"/>
<circle cx="1014" cy="469.6" r="6.2" fill="#00bb00"/>
<circle cx="974" cy="501.6" r="6.2" fill="#00bb00"/>
<circle cx="973.4" cy="588.6" r="6.2" fill="#00bb00"/>
<circle cx="370" cy="329.4" r="6.7" fill="#00bb00"/>
<circle cx="370" cy="359.6" r="6.7" fill="#00bb00"/>
<circle cx="371" cy="567" r="6.7" fill="#00bb00"/>
<circle cx="370" cy="598" r="6.7" fill="#00bb00"/>
<circle cx="662" cy="449" r="5.5" fill="#00bb00"/>
<circle cx="662" cy="463.4" r="5.5" fill="#00bb00"/>
<circle cx="662" cy="478" r="5.5" fill="#00bb00"/>
<circle cx="517" cy="343" r="6.5" fill="#00bb00"/>
<circle cx="558" cy="343" r="6.5" fill="#00bb00"/>
<circle cx="516.5" cy="487" r="6.5" fill="#00bb00"/>
<circle cx="516.5" cy="522" r="6.5" fill="#00bb00"/>
<circle cx="516" cy="583" r="6.5" fill="#00bb00"/>
<circle cx="557" cy="583" r="6.5" fill="#00bb00"/>
<circle cx="922" cy="360" r="6.5" fill="#00bb00"/>
<circle cx="958" cy="360" r="6.5" fill="#00bb00"/>
<circle cx="920" cy="389.4" r="6.5" fill="#00bb00"/>
<circle cx="957" cy="389.4" r="6.5" fill="#00bb00"/>
<circle cx="727" cy="630" r="6.5" fill="#00bb00"/>
<circle cx="782" cy="630" r="6.5" fill="#00bb00"/>
<circle cx="992" cy="607" r="6.5" fill="#00bb00"/>
<circle cx="1036" cy="607" r="6.5" fill="#00bb00"/>
<polygon points="1163.97,308.973 1156.37,316.571 1145.63,316.571 1138.03,308.973 1138.03,298.227 1145.63,290.629 1156.37,290.629 1163.97,298.227" fill="#00bb00"/>
<polygon points="1163.97,341.373 1156.37,348.971 1145.63,348.971 1138.03,341.373 1138.03,330.627 1145.63,323.029 1156.37,323.029 1163.97,330.627" fill="#00bb00"/>
<polygon points="1163.97,374.373 1156.37,381.971 1145.63,381.971 1138.03,374.373 1138.03,363.627 1145.63,356.029 1156.37,356.029 1163.97,363.627" fill="#00bb00"/>
<polygon points="1163.97,525.373 1156.37,532.971 1145.63,532.971 1138.03,525.373 1138.03,514.627 1145.63,507.029 1156.37,507.029 1163.97,514.627" fill="#00bb00"/>
<polygon points="1163.97,557.773 1156.37,565.371 1145.63,565.371 1138.03,557.773 1138.03,547.027 1145.63,539.429 1156.37,539.429 1163.97,547.027" fill="#00bb00"/>
<polygon points="1163.97,590.373 1156.37,597.971 1145.63,597.971 1138.03,590.373 1138.03,579.627 1145.63,572.029 1156.37,572.029 1163.97,579.627" fill="#00bb00"/>
<circle cx="316" cy="314.5" r="1.9" fill="#001400"/>
<circle cx="316" cy="360.5" r="1.9" fill="#001400"/>
<circle cx="419" cy="315" r="1.9" fill="#001400"/>
<circle cx="419" cy="376" r="1.9" fill="#001400"/>
<circle cx="459" cy="315.5" r="1.9" fill="#001400"/>
<circle cx="459" cy="377" r="1.9" fill="#001400"/>
<circle cx="493" cy="315" r="1.9" fill="#001400"/>
<circle cx="579" cy="314.6" r="1.9" fill="#001400"/>
<circle cx="615" cy="314.6" r="1.9" fill="#001400"/>
<circle cx="702.5" cy="315" r="1.9" fill="#001400"/>
<circle cx="459" cy="411" r="1.9" fill="#001400"/>
<circle cx="459" cy="425.6" r="1.9" fill="#001400"/>
<circle cx="459" cy="440" r="1.9" fill="#001400"/>
<circle cx="459" cy="488" r="1.9" fill="#001400"/>
<circle cx="459" cy="502.4" r="1.9" fill="#001400"/>
<circle cx="459" cy="517.6" r="1.9" fill="#001400"/>
<circle cx="459" cy="553.6" r="1.9" fill="#001400"/>
<circle cx="460" cy="614.4" r="1.9" fill="#001400"/>
<circle cx="493" cy="614.4" r="1.9" fill="#001400"/>
<circle cx="580" cy="614.4" r="1.9" fill="#001400"/>
<circle cx="616" cy="614.4" r="1.9" fill="#001400"/>
<circle cx="703" cy="614.4" r="1.9" fill="#001400"/>
<circle cx="311" cy="439" r="1.9" fill="#001400"/>
<circle cx="354" cy="439" r="1.9" fill="#001400"/>
<circle cx="415" cy="438.6" r="1.9" fill="#001400"/>
<circle cx="354.5" cy="463.8" r="1.9" fill="#001400"/>
<circle cx="415" cy="463.5" r="1.9" fill="#001400"/>
<circle cx="362" cy="496" r="1.9" fill="#001400"/>
<circle cx="407" cy="496" r="1.9" fill="#001400"/>
<circle cx="315.5" cy="559" r="1.9" fill="#001400"/>
<circle cx="315.5" cy="605" r="1.9" fill="#001400"/>
<circle cx="419" cy="553" r="1.9" fill="#001400"/>
<circle cx="419" cy="614" r="1.9" fill="#001400"/>
<circle cx="587" cy="411" r="1.9" fill="#001400"/>
<circle cx="587" cy="425.6" r="1.9" fill="#001400"/>
<circle cx="587" cy="440" r="1.9" fill="#001400"/>
<circle cx="585" cy="487" r="1.9" fill="#001400"/>
<circle cx="585" cy="501.6" r="1.9" fill="#001400"/>
<circle cx="585" cy="517" r="1.9" fill="#001400"/>
<circle cx="622.5" cy="342.8" r="1.9" fill="#001400"/>
<circle cx="622.5" cy="403.5" r="1.9" fill="#001400"/>
<circle cx="623" cy="522.4" r="1.9" fill="#001400"/>
<circle cx="623" cy="583" r="1.9" fill="#001400"/>
<circle cx="657" cy="402.5" r="1.9" fill="#001400"/>
<circle cx="718.6" cy="403" r="1.9" fill="#001400"/>
<circle cx="657" cy="522" r="1.9" fill="#001400"/>
<circle cx="718.6" cy="522" r="1.9" fill="#001400"/>
<circle cx="748" cy="331" r="1.9" fill="#001400"/>
<circle cx="748" cy="377" r="1.9" fill="#001400"/>
<circle cx="819" cy="343.6" r="1.9" fill="#001400"/>
<circle cx="819" cy="358.4" r="1.9" fill="#001400"/>
<circle cx="819" cy="372" r="1.9" fill="#001400"/>
<circle cx="760.4" cy="412" r="1.9" fill="#001400"/>
<circle cx="760.4" cy="498.4" r="1.9" fill="#001400"/>
<circle cx="817" cy="522" r="1.9" fill="#001400"/>
<circle cx="817" cy="536.2" r="1.9" fill="#001400"/>
<circle cx="817" cy="550" r="1.9" fill="#001400"/>
<circle cx="740.5" cy="575.6" r="1.9" fill="#001400"/>
<circle cx="786" cy="575.6" r="1.9" fill="#001400"/>
<circle cx="913" cy="426" r="1.9" fill="#001400"/>
<circle cx="959" cy="426" r="1.9" fill="#001400"/>
<circle cx="913" cy="463.6" r="1.9" fill="#001400"/>
<circle cx="973.4" cy="463.6" r="1.9" fill="#001400"/>
<circle cx="1014" cy="383" r="1.9" fill="#001400"/>
<circle cx="1014" cy="469.6" r="1.9" fill="#001400"/>
<circle cx="974" cy="501.6" r="1.9" fill="#001400"/>
<circle cx="973.4" cy="588.6" r="1.9" fill="#001400"/>
<circle cx="370" cy="329.4" r="1.9" fill="#001400"/>
<circle cx="370" cy="359.6" r="1.9" fill="#001400"/>
<circle cx="371" cy="567" r="1.9" fill="#001400"/>
<circle cx="370" cy="598" r="1.9" fill="#001400"/>
<circle cx="662" cy="449" r="1.7" fill="#001400"/>
<circle cx="662" cy="463.4" r="1.7" fill="#001400"/>
<circle cx="662" cy="478" r="1.7" fill="#001400"/>
<circle cx="589" cy="249.5" r="1.3" fill="#000"/>
<circle cx="684.3" cy="251" r="1.3" fill="#000"/>
<circle cx="590.3" cy="698.6" r="1.3" fill="#000"/>
<circle cx="685.1" cy="700.1" r="1.3" fill="#000"/>
<circle cx="935" cy="258.4" r="1.3" fill="#000"/>
<circle cx="1103" cy="258.4" r="1.3" fill="#000"/>
<circle cx="934" cy="685.6" r="1.3" fill="#000"/>
<circle cx="1102" cy="685.6" r="1.3" fill="#000"/>
<circle cx="479" cy="249.5" r="1.3" fill="#000"/>
<circle cx="478.4" cy="699.6" r="1.3" fill="#000"/>
</g>
<g id="silk">
<g fill="none" stroke="#e40000" stroke-width="1" shape-rendering="crispEdges"><rect x="307" y="308.5" width="18.5" height="58.9"/>
<line x1="316" y1="320" x2="316" y2="355"/>
<line x1="311" y1="336.4" x2="321" y2="336.4"/>
<line x1="311" y1="339.4" x2="321" y2="339.4"/>
<circle cx="370" cy="344.6" r="30"/>
<line x1="370" y1="335" x2="370" y2="341"/>
<line x1="370" y1="348" x2="370" y2="354"/>
<rect x="362" y="341" width="17" height="4.5" rx="1.5"/>
<line x1="362" y1="348" x2="379" y2="348"/>
<line x1="382" y1="329.4" x2="387" y2="329.4"/>
<line x1="384.5" y1="327" x2="384.5" y2="332"/>
<line x1="419" y1="320" x2="419" y2="371"/>
<path d="M413,348.5 L425,348.5 L419,342 Z"/>
<line x1="413" y1="342" x2="425" y2="342"/>
<rect x="453" y="335" width="12" height="23"/>
<line x1="459" y1="321" x2="459" y2="335"/>
<line x1="459" y1="358" x2="459" y2="372"/>
<path d="M453,402.4 A24.4,24.4 0 1 1 453,449.6"/>
<path d="M465,478.9 A24.4,24.4 0 1 0 465,526.1"/>
<rect x="373" y="433" width="22" height="11.4"/>
<line x1="360" y1="439" x2="373" y2="439"/>
<line x1="395" y1="439" x2="409" y2="439"/>
<rect x="373" y="458" width="23" height="11"/>
<line x1="360" y1="463.6" x2="373" y2="463.6"/>
<line x1="396" y1="463.6" x2="409" y2="463.6"/>
<rect x="355.4" y="486" width="59" height="19"/>
<line x1="368" y1="496" x2="383.5" y2="496"/>
<line x1="386.5" y1="496" x2="401" y2="496"/>
<line x1="383.5" y1="490" x2="383.5" y2="502"/>
<line x1="386.5" y1="490" x2="386.5" y2="502"/>
<rect x="306.4" y="553" width="18.6" height="58.6"/>
<line x1="315.5" y1="565" x2="315.5" y2="600"/>
<line x1="310.5" y1="580.4" x2="320.5" y2="580.4"/>
<line x1="310.5" y1="583.4" x2="320.5" y2="583.4"/>
<circle cx="370" cy="582" r="30"/>
<line x1="370" y1="573" x2="370" y2="579"/>
<line x1="370" y1="586" x2="370" y2="592"/>
<rect x="362" y="579" width="17" height="4.5" rx="1.5"/>
<line x1="362" y1="586" x2="379" y2="586"/>
<line x1="382" y1="567" x2="387" y2="567"/>
<line x1="384.5" y1="564.5" x2="384.5" y2="569.5"/>
<line x1="419" y1="558" x2="419" y2="609"/>
<path d="M413,586.4 L425,586.4 L419,580 Z"/>
<line x1="413" y1="580" x2="425" y2="580"/>
<rect x="454.4" y="572.4" width="11.2" height="22.6"/>
<line x1="460" y1="559" x2="460" y2="572.4"/>
<line x1="460" y1="595" x2="460" y2="609"/>
<rect x="500" y="302.3" width="15" height="25.4" rx="2.5"/>
<rect x="557" y="302.3" width="15" height="25.4" rx="2.5"/>
<line x1="515" y1="303.8" x2="557" y2="303.8"/>
<line x1="515" y1="326.2" x2="557" y2="326.2"/>
<rect x="495" y="312.8" width="5" height="4.4"/>
<rect x="572" y="312.8" width="5" height="4.4"/>
<rect x="622.3" y="302.3" width="15" height="25.4" rx="2.5"/>
<rect x="680.6" y="302.3" width="15" height="25.4" rx="2.5"/>
<line x1="637.3" y1="303.8" x2="680.6" y2="303.8"/>
<line x1="637.3" y1="326.2" x2="680.6" y2="326.2"/>
<rect x="617.3" y="312.8" width="5" height="4.4"/>
<rect x="695.6" y="312.8" width="5" height="4.4"/>
<rect x="500.4" y="602" width="15" height="25.4" rx="2.5"/>
<rect x="558" y="602" width="15" height="25.4" rx="2.5"/>
<line x1="515.4" y1="603.5" x2="558" y2="603.5"/>
<line x1="515.4" y1="625.9" x2="558" y2="625.9"/>
<rect x="495.4" y="612.5" width="5" height="4.4"/>
<rect x="573" y="612.5" width="5" height="4.4"/>
<rect x="623" y="602" width="15" height="25.4" rx="2.5"/>
<rect x="680.6" y="602" width="15" height="25.4" rx="2.5"/>
<line x1="638" y1="603.5" x2="680.6" y2="603.5"/>
<line x1="638" y1="625.9" x2="680.6" y2="625.9"/>
<rect x="618" y="612.5" width="5" height="4.4"/>
<rect x="695.6" y="612.5" width="5" height="4.4"/>
<rect x="616.4" y="362" width="12" height="22"/>
<line x1="622.5" y1="348" x2="622.5" y2="362"/>
<line x1="622.5" y1="384" x2="622.5" y2="398"/>
<rect x="617" y="541" width="12" height="22.6"/>
<line x1="623" y1="528" x2="623" y2="541"/>
<line x1="623" y1="563.6" x2="623" y2="578"/>
<path d="M593,402.4 A24.4,24.4 0 1 0 593,449.6"/>
<path d="M579,478.4 A24.4,24.4 0 1 1 579,525.6"/>
<rect x="654.4" y="434.4" width="29.6" height="58.6"/>
<rect x="657" y="451" width="11" height="26"/>
<circle cx="675" cy="484" r="5.5"/>
<rect x="679" y="456" width="4" height="13"/>
<rect x="669" y="493" width="10" height="10"/>
<path d="M664,460.5 L667,463.4 L664,466.3"/>
<rect x="676" y="398" width="24" height="11"/>
<line x1="662.5" y1="403" x2="676" y2="403"/>
<line x1="700" y1="403" x2="713" y2="403"/>
<rect x="676" y="516" width="24" height="11"/>
<line x1="662.5" y1="522" x2="676" y2="522"/>
<line x1="700" y1="522" x2="713" y2="522"/>
<rect x="738.4" y="324.4" width="19" height="58.6"/>
<line x1="748" y1="336.5" x2="748" y2="371.5"/>
<line x1="742.5" y1="353.3" x2="753.5" y2="353.3"/>
<line x1="742.5" y1="355.6" x2="753.5" y2="355.6"/>
<rect x="811" y="335" width="15.4" height="45.4"/>
<rect x="809" y="513" width="15.4" height="45"/>
<rect x="748.1" y="419" width="25" height="15" rx="2.5"/>
<rect x="748.1" y="476" width="25" height="15" rx="2.5"/>
<line x1="749.6" y1="434" x2="749.6" y2="476"/>
<line x1="771.6" y1="434" x2="771.6" y2="476"/>
<rect x="758.4" y="414" width="4.4" height="5"/>
<rect x="758.4" y="491" width="4.4" height="5"/>
<rect x="734.4" y="566" width="58.6" height="19"/>
<line x1="746" y1="575.6" x2="762" y2="575.6"/>
<line x1="765" y1="575.6" x2="780.5" y2="575.6"/>
<line x1="762" y1="570" x2="762" y2="581"/>
<line x1="765" y1="570" x2="765" y2="581"/>
<rect x="906.6" y="416.6" width="59" height="18.4"/>
<line x1="918.5" y1="426" x2="935" y2="426"/>
<line x1="938" y1="426" x2="953.5" y2="426"/>
<line x1="935" y1="421" x2="935" y2="431"/>
<line x1="938" y1="421" x2="938" y2="431"/>
<rect x="931.6" y="457" width="23.4" height="12"/>
<line x1="918.5" y1="463.6" x2="931.6" y2="463.6"/>
<line x1="955" y1="463.6" x2="968" y2="463.6"/>
<rect x="1001.4" y="390.4" width="25.6" height="14.6" rx="2.5"/>
<rect x="1001.4" y="447.8" width="25.6" height="14.6" rx="2.5"/>
<line x1="1002.9" y1="405" x2="1002.9" y2="447.8"/>
<line x1="1025.5" y1="405" x2="1025.5" y2="447.8"/>
<rect x="1012" y="385.4" width="4.4" height="5"/>
<rect x="1012" y="462.4" width="4.4" height="5"/>
<rect x="961.6" y="509" width="24.8" height="14.6" rx="2.5"/>
<rect x="961.6" y="566.4" width="24.8" height="14.6" rx="2.5"/>
<line x1="963.1" y1="523.6" x2="963.1" y2="566.4"/>
<line x1="984.9" y1="523.6" x2="984.9" y2="566.4"/>
<rect x="971.8" y="504" width="4.4" height="5"/>
<rect x="971.8" y="581" width="4.4" height="5"/>
<rect x="950" y="228.4" width="138.4" height="60"/>
<line x1="936" y1="258.4" x2="950" y2="258.4"/>
<line x1="1088.4" y1="258.4" x2="1102" y2="258.4"/>
<rect x="948.6" y="655" width="138.8" height="61"/>
<line x1="935" y1="685.6" x2="948.6" y2="685.6"/>
<line x1="1087.4" y1="685.6" x2="1101" y2="685.6"/>
<rect x="572" y="234.4" width="33" height="31.2"/>
<rect x="667" y="234.5" width="32.4" height="30.7"/>
<line x1="605" y1="237.6" x2="667" y2="237.6"/>
<line x1="605" y1="261.6" x2="667" y2="261.6"/>
<rect x="574" y="682.4" width="31.6" height="32"/>
<rect x="668.5" y="682.6" width="31.2" height="32.3"/>
<line x1="605.6" y1="687.2" x2="668.5" y2="687.2"/>
<line x1="605.6" y1="711.3" x2="668.5" y2="711.3"/>
<path d="M1160,274 L1136,274 Q1130,274 1130,280 L1130,391 Q1130,397 1136,397 L1160,397"/>
<path d="M1160,489.6 L1136,489.6 Q1130,489.6 1130,495.6 L1130,607 Q1130,613 1136,613 L1160,613"/></g>
<g fill="#f01010" stroke="#f01010" stroke-width="0.4" style="font-family:DejaVu Sans,Liberation Sans,sans-serif;font-weight:200"><text x="474" y="248.32" textLength="25.6" lengthAdjust="spacingAndGlyphs" font-size="12">+35v</text>
<text x="625" y="254.82" textLength="17" lengthAdjust="spacingAndGlyphs" font-size="12">10a</text>
<text x="303" y="381.32" textLength="24" lengthAdjust="spacingAndGlyphs" font-size="12">100n</text>
<text x="350" y="390.72" textLength="41.6" lengthAdjust="spacingAndGlyphs" font-size="12">22u 50v</text>
<text x="403.6" y="393.32" textLength="35.4" lengthAdjust="spacingAndGlyphs" font-size="12">22v 1w</text>
<text x="477" y="354.92" textLength="17" lengthAdjust="spacingAndGlyphs" font-size="12">180</text>
<text x="518.6" y="319.12" textLength="34.4" lengthAdjust="spacingAndGlyphs" font-size="12">47k 1w</text>
<text x="645.8" y="319.92" textLength="34.7" lengthAdjust="spacingAndGlyphs" font-size="12">1,1k 1w</text>
<text x="473" y="398.32" textLength="26" lengthAdjust="spacingAndGlyphs" font-size="12">a970</text>
<text x="530" y="398.32" textLength="31.6" lengthAdjust="spacingAndGlyphs" font-size="12">c2240</text>
<text x="637" y="377.32" textLength="7.5" lengthAdjust="spacingAndGlyphs" font-size="12">1k</text>
<text x="680" y="391.92" textLength="20" lengthAdjust="spacingAndGlyphs" font-size="12">442</text>
<text x="793" y="321.72" textLength="38" lengthAdjust="spacingAndGlyphs" font-size="12">2sa634</text>
<text x="738.4" y="395.32" textLength="18.6" lengthAdjust="spacingAndGlyphs" font-size="12">68p</text>
<text x="992.4" y="267.32" textLength="42" lengthAdjust="spacingAndGlyphs" font-size="12">0,33 5w</text>
<text x="1080" y="337.32" textLength="44.4" lengthAdjust="spacingAndGlyphs" font-size="12">mjl21194</text>
<text x="374" y="427.92" textLength="19.6" lengthAdjust="spacingAndGlyphs" font-size="12">680</text>
<text x="374" y="481.92" textLength="18" lengthAdjust="spacingAndGlyphs" font-size="12">33k</text>
<text x="371.6" y="521.32" textLength="23.4" lengthAdjust="spacingAndGlyphs" font-size="12">150p</text>
<text x="306" y="443.1" textLength="7" lengthAdjust="spacingAndGlyphs" font-size="10">in</text>
<text x="299.5" y="489.46" textLength="5.5" lengthAdjust="spacingAndGlyphs" font-size="11">0</text>
<text x="624" y="466.72" textLength="21" lengthAdjust="spacingAndGlyphs" font-size="12">500</text>
<text x="544" y="513.32" textLength="25.6" lengthAdjust="spacingAndGlyphs" font-size="12">a970</text>
<text x="470" y="540.32" textLength="32" lengthAdjust="spacingAndGlyphs" font-size="12">c2240</text>
<text x="637" y="559.32" textLength="8" lengthAdjust="spacingAndGlyphs" font-size="12">1k</text>
<text x="680" y="542.32" textLength="19" lengthAdjust="spacingAndGlyphs" font-size="12">442</text>
<text x="781.6" y="464.92" textLength="25.4" lengthAdjust="spacingAndGlyphs" font-size="12">10 1w</text>
<text x="878" y="427.92" textLength="22" lengthAdjust="spacingAndGlyphs" font-size="12">2,2n</text>
<text x="931.6" y="481.92" textLength="20" lengthAdjust="spacingAndGlyphs" font-size="12">300</text>
<text x="1031" y="434.32" textLength="37.4" lengthAdjust="spacingAndGlyphs" font-size="12">1,8k 2w</text>
<text x="995.6" y="552.32" textLength="37.4" lengthAdjust="spacingAndGlyphs" font-size="12">1,8k 2w</text>
<text x="1077.6" y="533.92" textLength="44.4" lengthAdjust="spacingAndGlyphs" font-size="12">mjl21193</text>
<text x="473.6" y="589.32" textLength="20" lengthAdjust="spacingAndGlyphs" font-size="12">240</text>
<text x="520" y="618.92" textLength="35.6" lengthAdjust="spacingAndGlyphs" font-size="12">47k 1w</text>
<text x="646" y="618.92" textLength="34.7" lengthAdjust="spacingAndGlyphs" font-size="12">1,1k 1w</text>
<text x="302.4" y="631.32" textLength="24" lengthAdjust="spacingAndGlyphs" font-size="12">100n</text>
<text x="350" y="630.72" textLength="46" lengthAdjust="spacingAndGlyphs" font-size="12">22uf 50v</text>
<text x="409" y="629.92" textLength="36" lengthAdjust="spacingAndGlyphs" font-size="12">22v 1w</text>
<text x="752" y="597.92" textLength="19.6" lengthAdjust="spacingAndGlyphs" font-size="12">68p</text>
<text x="792.4" y="609.92" textLength="43.2" lengthAdjust="spacingAndGlyphs" font-size="12">2sc1096</text>
<text x="469.6" y="703.32" textLength="26.4" lengthAdjust="spacingAndGlyphs" font-size="12">-35v</text>
<text x="625" y="705.32" textLength="17" lengthAdjust="spacingAndGlyphs" font-size="12">10a</text>
<text x="1000.6" y="691.72" textLength="41.8" lengthAdjust="spacingAndGlyphs" font-size="12">0,33 5w</text>
<text x="295" y="696.36" textLength="15" lengthAdjust="spacingAndGlyphs" font-size="11">out</text></g>
</g>
<use href="#tracks" opacity="0.32"/>
<g id="jumpers">
<polyline points="517,343 558,343" fill="none" stroke="#ff0000" stroke-width="8" stroke-linecap="round" stroke-linejoin="round"/>
<polyline points="516.5,487 516.5,522" fill="none" stroke="#ff0000" stroke-width="8" stroke-linecap="round" stroke-linejoin="round"/>
<polyline points="516,583 557,583" fill="none" stroke="#ff0000" stroke-width="8" stroke-linecap="round" stroke-linejoin="round"/>
<polyline points="922,360 958,360" fill="none" stroke="#ff0000" stroke-width="8" stroke-linecap="round" stroke-linejoin="round"/>
<polyline points="920,389.4 957,389.4" fill="none" stroke="#ff0000" stroke-width="8" stroke-linecap="round" stroke-linejoin="round"/>
<polyline points="727,630 782,630" fill="none" stroke="#ff0000" stroke-width="8" stroke-linecap="round" stroke-linejoin="round"/>
<polyline points="992,607 1036,607" fill="none" stroke="#ff0000" stroke-width="8" stroke-linecap="round" stroke-linejoin="round"/>
<circle cx="517" cy="343" r="0.9" fill="#500"/>
<circle cx="558" cy="343" r="0.9" fill="#500"/>
<circle cx="516.5" cy="487" r="0.9" fill="#500"/>
<circle cx="516.5" cy="522" r="0.9" fill="#500"/>
<circle cx="516" cy="583" r="0.9" fill="#500"/>
<circle cx="557" cy="583" r="0.9" fill="#500"/>
<circle cx="922" cy="360" r="0.9" fill="#500"/>
<circle cx="958" cy="360" r="0.9" fill="#500"/>
<circle cx="920" cy="389.4" r="0.9" fill="#500"/>
<circle cx="957" cy="389.4" r="0.9" fill="#500"/>
<circle cx="727" cy="630" r="0.9" fill="#500"/>
<circle cx="782" cy="630" r="0.9" fill="#500"/>
<circle cx="992" cy="607" r="0.9" fill="#500"/>
<circle cx="1036" cy="607" r="0.9" fill="#500"/>
</g>
<g id="big">
<circle cx="1151" cy="303.6" r="5.9" fill="#000" stroke="#ff0000" stroke-width="3"/>
<circle cx="1151" cy="336" r="5.9" fill="#000" stroke="#ff0000" stroke-width="3"/>
<circle cx="1151" cy="369" r="5.9" fill="#000" stroke="#ff0000" stroke-width="3"/>
<circle cx="1151" cy="520" r="5.9" fill="#000" stroke="#ff0000" stroke-width="3"/>
<circle cx="1151" cy="552.4" r="5.9" fill="#000" stroke="#ff0000" stroke-width="3"/>
<circle cx="1151" cy="585" r="5.9" fill="#000" stroke="#ff0000" stroke-width="3"/>
<rect x="1159" y="273.6" width="5.6" height="123" fill="#ff0000"/>
<rect x="1159" y="489.4" width="5.6" height="123.8" fill="#ff0000"/>
</g>
</svg>
<rect x="121" y="904" width="1138" height="17" fill="#efefef"/>
<rect x="119.5" y="904" width="1.2" height="17.5" fill="#6e6e6e"/>
<rect x="121" y="904" width="1138" height="1" fill="#e2e2e2"/>
<path d="M132,912.5 L127.4,909 L127.4,916 Z" fill="#404040" transform="rotate(180 129.7 912.5)"/>
<path d="M1250.6,912.5 L1246,909 L1246,916 Z" fill="#404040"/>
<rect x="263" y="905.6" width="416.5" height="14" rx="2" fill="url(#gThumb)" stroke="#9a9a9a" stroke-width="1"/>
<path d="M467.5,909 v6.6 M470,909 v6.6 M472.5,909 v6.6" stroke="#505050" stroke-width="1.2"/>
<rect x="1259" y="93" width="4" height="829" fill="#e9e9e9"/><rect x="1259" y="93" width="1.4" height="811" fill="#ffffff"/><rect x="1260.4" y="150" width="2.6" height="246" fill="#f5f5f5"/><rect x="1260.2" y="150" width="0.9" height="246" fill="#9c9c9c"/><rect x="1260.2" y="395.4" width="2.8" height="0.9" fill="#9c9c9c"/>
<rect x="96" y="921" width="1167" height="23" fill="#f6f6f6"/>
<rect x="96" y="922.2" width="1167" height="1.8" fill="#7c7c7c"/><rect x="96" y="924" width="1167" height="1" fill="#d0d0d0"/>
<path d="M103.6,923.6 L108.6,939.4 L151,939.4 L156.2,923.6" fill="#f2f2f2" stroke="#585858" stroke-width="1.1"/>
<rect x="104.4" y="921.6" width="51" height="2.8" fill="#f2f2f2"/>
<text x="109.2" y="935.6" font-size="11" fill="#000" textLength="36.6" lengthAdjust="spacingAndGlyphs">Board 1</text>
<rect x="0" y="944" width="1263" height="38" fill="#f0f0f0"/>
<rect x="0" y="982" width="1263" height="2" fill="#2a4a86"/><rect x="120" y="983" width="57" height="1" fill="#e6e8f0"/><rect x="183" y="983" width="56" height="1" fill="#e6e8f0"/>
<path d="M1.5,981.5 L1.5,945.5 L84.5,945.5" fill="none" stroke="#a0a0a0" stroke-width="1"/><path d="M1.5,981.5 L84.5,981.5 L84.5,945.5" fill="none" stroke="#ffffff" stroke-width="1"/>
<text x="6" y="960" font-size="11" fill="#000" textLength="9.6" lengthAdjust="spacingAndGlyphs">X:</text>
<text x="22.2" y="960" font-size="11" fill="#000" textLength="57.8" lengthAdjust="spacingAndGlyphs">218,500 mm</text>
<text x="6" y="975" font-size="11" fill="#000" textLength="9.6" lengthAdjust="spacingAndGlyphs">Y:</text>
<text x="28.2" y="975" font-size="11" fill="#000" textLength="51.8" lengthAdjust="spacingAndGlyphs">48,833 mm</text>
<path d="M89.5,981.5 L89.5,945.5 L271.5,945.5" fill="none" stroke="#a0a0a0" stroke-width="1"/><path d="M89.5,981.5 L271.5,981.5 L271.5,945.5" fill="none" stroke="#ffffff" stroke-width="1"/>
<rect x="137" y="945.5" width="119.5" height="17.5" fill="#000"/>
<path d="M90,963 h166.5 M136.6,946 v35.5 M160,963 v18.5 M184,963 v18.5 M208,963 v18.5 M232,963 v18.5 M256.6,963 v18.5" stroke="#b4b4b4" stroke-width="1" fill="none"/>
<text x="97" y="957" font-size="11" fill="#000" textLength="31" lengthAdjust="spacingAndGlyphs">visible</text>
<text x="96.6" y="975.6" font-size="11" fill="#000" textLength="28.6" lengthAdjust="spacingAndGlyphs">active</text>
<text x="140.4" y="959" style="font-family:Liberation Serif,serif;font-weight:bold" font-size="14" fill="#3d6fe0" textLength="15.4" lengthAdjust="spacingAndGlyphs">C1</text>
<text x="165" y="959" style="font-family:Liberation Serif,serif;font-weight:bold" font-size="14" fill="#e81414" textLength="15.4" lengthAdjust="spacingAndGlyphs">S1</text>
<text x="188.6" y="959" style="font-family:Liberation Serif,serif;font-weight:bold" font-size="14" fill="#18b018" textLength="15.4" lengthAdjust="spacingAndGlyphs">C2</text>
<text x="213" y="959" style="font-family:Liberation Serif,serif;font-weight:bold" font-size="14" fill="#eadc2a" textLength="15.4" lengthAdjust="spacingAndGlyphs">S2</text>
<text x="239.6" y="959" style="font-family:Liberation Serif,serif;font-weight:bold" font-size="14" fill="#ffffff" textLength="9.4" lengthAdjust="spacingAndGlyphs">O</text>
<circle cx="146.6" cy="973" r="5.6" fill="#f4f4f4" stroke="#8c8c8c" stroke-width="1"/><circle cx="146.6" cy="973" r="4" fill="#e2e2e2" opacity="0.7"/>
<circle cx="170.6" cy="973" r="5.6" fill="#f4f4f4" stroke="#8c8c8c" stroke-width="1"/><circle cx="170.6" cy="973" r="4" fill="#e2e2e2" opacity="0.7"/>
<circle cx="170.6" cy="973" r="3" fill="#1f7fc4"/><circle cx="169.79999999999998" cy="972.2" r="1.1" fill="#8fd0f4"/>
<circle cx="194.6" cy="973" r="5.6" fill="#f4f4f4" stroke="#8c8c8c" stroke-width="1"/><circle cx="194.6" cy="973" r="4" fill="#e2e2e2" opacity="0.7"/>
<circle cx="218.6" cy="973" r="5.6" fill="#f4f4f4" stroke="#8c8c8c" stroke-width="1"/><circle cx="218.6" cy="973" r="4" fill="#e2e2e2" opacity="0.7"/>
<circle cx="242.6" cy="973" r="5.6" fill="#f4f4f4" stroke="#8c8c8c" stroke-width="1"/><circle cx="242.6" cy="973" r="4" fill="#e2e2e2" opacity="0.7"/>
<text x="261.6" y="968" font-size="11" fill="#000" textLength="4.6" lengthAdjust="spacingAndGlyphs">?</text>
<path d="M276.5,981.5 L276.5,944.5 L313,944.5" fill="none" stroke="#a0a0a0" stroke-width="1"/><path d="M276.5,981.5 L313,981.5 L313,944.5" fill="none" stroke="#ffffff" stroke-width="1"/>
<path d="M317.5,981.5 L317.5,944.5 L354,944.5" fill="none" stroke="#a0a0a0" stroke-width="1"/><path d="M317.5,981.5 L354,981.5 L354,944.5" fill="none" stroke="#ffffff" stroke-width="1"/>
<path d="M358.5,981.5 L358.5,944.5 L395,944.5" fill="none" stroke="#a0a0a0" stroke-width="1"/><path d="M358.5,981.5 L395,981.5 L395,944.5" fill="none" stroke="#ffffff" stroke-width="1"/>
<path d="M399.5,981.5 L399.5,944.5 L1262.5,944.5" fill="none" stroke="#a0a0a0" stroke-width="1"/><path d="M399.5,981.5 L1262.5,981.5 L1262.5,944.5" fill="none" stroke="#ffffff" stroke-width="1"/>
<rect x="406" y="961" width="857" height="1" fill="#a0a0a0"/><rect x="406" y="962" width="857" height="1" fill="#fff"/>
<path d="M282.6,954.8 h6 l7,7.4" fill="none" stroke="#a2a2a2" stroke-width="2.8"/><circle cx="297.6" cy="964.8" r="2.6" fill="#f0f0f0" stroke="#a2a2a2" stroke-width="2.2"/>
<circle cx="335" cy="962.4" r="4.6" fill="#f0f0f0" stroke="#8a8a8a" stroke-width="3.4"/><path d="M335,950.4 v24 M322.4,962.4 h25.2" stroke="#6a6a6a" stroke-width="0.9"/>
<path d="M370,964 q-2,3.4 2.6,3.6 q4.4,0 6.4,-3 q1.6,-2.6 4.6,-3.4 q3,-1.4 2,-3.8 q-1.4,-1.8 -5,-0.2 q-3,1.6 -5.6,2.8 q-3.6,1.4 -5,4 Z" fill="none" stroke="#222" stroke-width="1.3"/>
</svg>

</body></html>
